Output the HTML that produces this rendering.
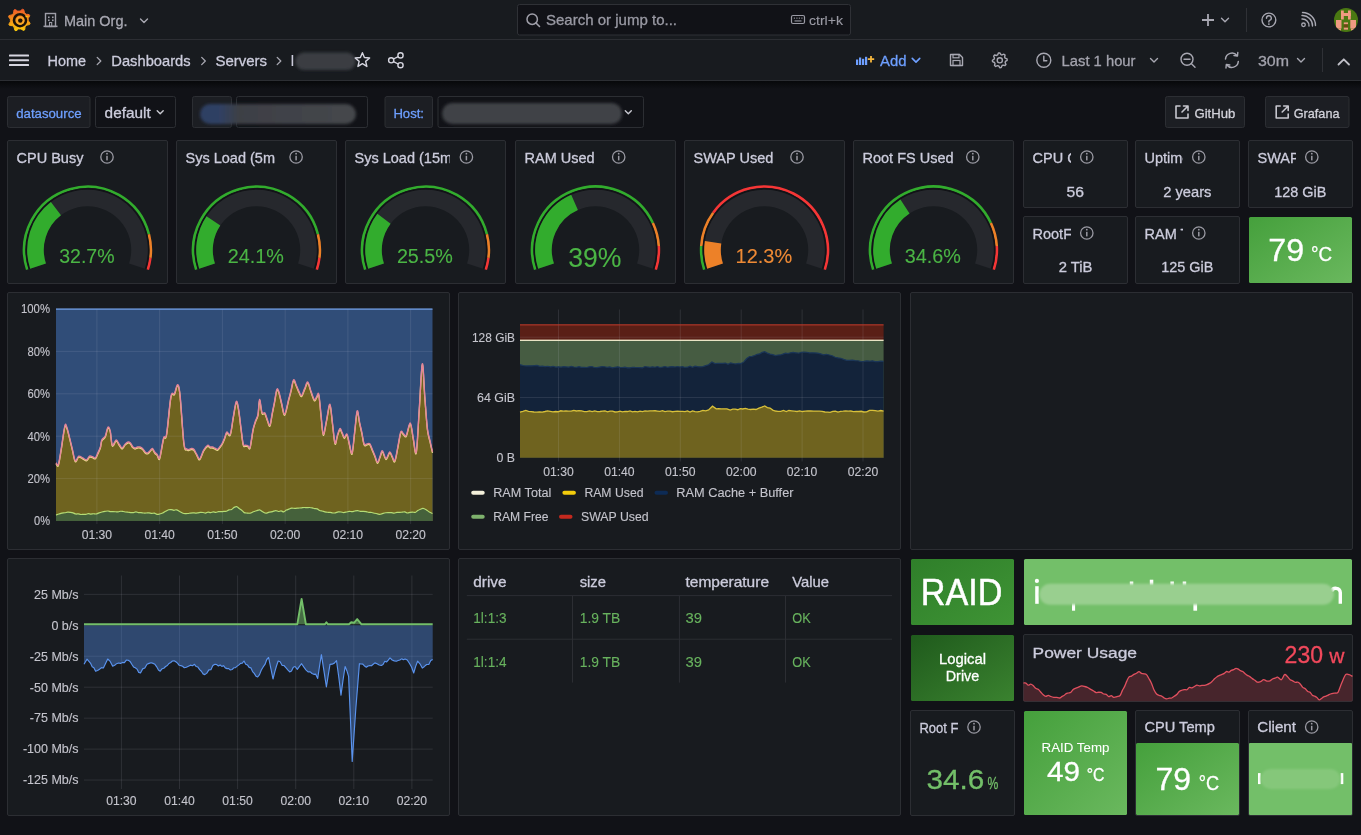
<!DOCTYPE html>
<html><head><meta charset="utf-8"><title>Grafana</title>
<style>html,body{margin:0;padding:0;background:#111217;overflow:hidden;width:1361px;height:835px}
svg{display:block;will-change:transform} text{font-family:"Liberation Sans",sans-serif}</style></head>
<body><svg width="1361" height="835" viewBox="0 0 1361 835">
<defs>
<linearGradient id="gshadow" x1="0" y1="0" x2="0" y2="1"><stop offset="0" stop-color="#07080a"/><stop offset="1" stop-color="#111217"/></linearGradient>
<linearGradient id="glogo" x1="0" y1="0" x2="0" y2="1"><stop offset="0" stop-color="#f05a28"/><stop offset="1" stop-color="#fbca0a"/></linearGradient>
<linearGradient id="gdg" x1="0" y1="0" x2="1" y2="1"><stop offset="0" stop-color="#2f7f2a"/><stop offset="1" stop-color="#3f9435"/></linearGradient>
<linearGradient id="gld" x1="0" y1="0" x2="1" y2="1"><stop offset="0" stop-color="#1f5a1c"/><stop offset="1" stop-color="#3a822f"/></linearGradient>
<linearGradient id="glg" x1="0" y1="0" x2="1" y2="1"><stop offset="0" stop-color="#45a03c"/><stop offset="1" stop-color="#6ab85e"/></linearGradient>
<filter id="blur1" x="-20%" y="-50%" width="140%" height="200%"><feGaussianBlur stdDeviation="0.9"/></filter>
<filter id="blur3" x="-20%" y="-50%" width="140%" height="200%"><feGaussianBlur stdDeviation="1.6"/></filter>
</defs>
<rect x="0" y="0" width="1361" height="835" fill="#111217"/>
<rect x="0" y="0" width="1361" height="80" fill="#181b1f"/>
<rect x="0" y="39" width="1361" height="1" fill="#2c2e33"/>
<rect x="0" y="80" width="1361" height="1" fill="#2c2e33"/>
<rect x="0" y="81" width="1361" height="8" fill="url(#gshadow)"/>
<path d="M21.32,10.04 L22.61,9.24 L23.65,9.62 L24.12,11.05 L24.37,12.47 L25.01,13.09 L25.66,13.68 L26.25,14.34 L27.77,14.38 L29.25,14.73 L29.71,15.73 L29.04,17.08 L28.21,18.26 L28.23,19.15 L28.27,20.03 L28.22,20.91 L29.26,22.02 L30.06,23.31 L29.68,24.35 L28.25,24.82 L26.83,25.07 L26.21,25.71 L25.62,26.36 L24.96,26.95 L24.92,28.47 L24.57,29.95 L23.57,30.41 L22.22,29.74 L21.04,28.91 L20.15,28.93 L19.27,28.97 L18.39,28.92 L17.28,29.96 L15.99,30.76 L14.95,30.38 L14.48,28.95 L14.23,27.53 L13.59,26.91 L12.94,26.32 L12.35,25.66 L10.83,25.62 L9.35,25.27 L8.89,24.27 L9.56,22.92 L10.39,21.74 L10.37,20.85 L10.33,19.97 L10.38,19.09 L9.34,17.98 L8.54,16.69 L8.92,15.65 L10.35,15.18 L11.77,14.93 L12.39,14.29 L12.98,13.64 L13.64,13.05 L13.68,11.53 L14.03,10.05 L15.03,9.59 L16.38,10.26 L17.56,11.09 L18.45,11.07 L19.33,11.03 L20.21,11.08 Z" fill="url(#glogo)" stroke="url(#glogo)" stroke-width="1" stroke-linejoin="round"/>
<circle cx="20.00" cy="20.20" r="6.0" fill="none" stroke="#1a1208" stroke-width="2.6"/>
<path d="M25.50,16.50 L28.30,15.00" stroke="url(#glogo)" stroke-width="2.2"/>
<circle cx="20.30" cy="20.60" r="3.3" fill="none" stroke="#f7a52a" stroke-width="1.5"/>
<circle cx="20.30" cy="20.60" r="2.2" fill="#1a1208"/>
<rect x="45.5" y="13.5" width="10" height="13" fill="none" stroke="#9e9ea8" stroke-width="1.4"/>
<rect x="43.5" y="25.6" width="14" height="1.5" fill="#9e9ea8"/>
<rect x="48" y="16.5" width="1.6" height="1.6" fill="#9e9ea8"/>
<rect x="48" y="19.5" width="1.6" height="1.6" fill="#9e9ea8"/>
<rect x="52" y="16.5" width="1.6" height="1.6" fill="#9e9ea8"/>
<rect x="52" y="19.5" width="1.6" height="1.6" fill="#9e9ea8"/>
<rect x="49.5" y="22.5" width="2.2" height="4" fill="none" stroke="#9e9ea8" stroke-width="1.1"/>
<text x="64.00" y="25.50" font-size="15.5" fill="#a8a8b2" stroke="#a8a8b2" stroke-width="0.3" textLength="63.50" lengthAdjust="spacingAndGlyphs">Main Org.</text>
<path d="M140.50,18.95 L144.00,22.45 L147.50,18.95" fill="none" stroke="#a8a8b2" stroke-width="1.4" stroke-linecap="round" stroke-linejoin="round"/>
<rect x="517.5" y="4.5" width="333" height="30.5" rx="2" fill="#111217" stroke="#2f3136"/>
<circle cx="532.2" cy="19.2" r="5.2" fill="none" stroke="#a0a0aa" stroke-width="1.5"/>
<path d="M536,23 L539.5,26.5" fill="none" stroke="#a0a0aa" stroke-width="1.6" stroke-linecap="round"/>
<text x="546.00" y="25.30" font-size="15" fill="#9a9aa4" stroke="#9a9aa4" stroke-width="0.3" textLength="131.00" lengthAdjust="spacingAndGlyphs">Search or jump to...</text>
<rect x="791.5" y="15.5" width="13" height="8" rx="1.5" fill="none" stroke="#9a9aa4" stroke-width="1.2"/>
<rect x="793.8" y="17.6" width="1.2" height="1.1" fill="#9a9aa4"/>
<rect x="796.3" y="17.6" width="1.2" height="1.1" fill="#9a9aa4"/>
<rect x="798.8" y="17.6" width="1.2" height="1.1" fill="#9a9aa4"/>
<rect x="801.3" y="17.6" width="1.2" height="1.1" fill="#9a9aa4"/>
<rect x="794.5" y="20.4" width="7" height="1.1" fill="#9a9aa4"/>
<text x="809.00" y="25.00" font-size="12.5" fill="#9a9aa4" stroke="#9a9aa4" stroke-width="0.12" textLength="34.00" lengthAdjust="spacingAndGlyphs">ctrl+k</text>
<path d="M1208,14 L1208,26 M1202,20 L1214,20" fill="none" stroke="#a8a8b2" stroke-width="1.8"/>
<path d="M1221.50,18.25 L1225.00,21.75 L1228.50,18.25" fill="none" stroke="#a8a8b2" stroke-width="1.4" stroke-linecap="round" stroke-linejoin="round"/>
<rect x="1246" y="8" width="1" height="24" fill="#2f3136"/>
<circle cx="1268.9" cy="20" r="6.9" fill="none" stroke="#a8a8b2" stroke-width="1.4"/>
<path d="M1266.5,18.2 A2.4,2.4 0 1 1 1269.6,20.4 L1268.9,21 L1268.9,22" fill="none" stroke="#a8a8b2" stroke-width="1.4" stroke-linecap="round"/>
<circle cx="1268.9" cy="24.1" r="0.9" fill="#a8a8b2"/>
<circle cx="1303.5" cy="24.8" r="1.8" fill="none" stroke="#a8a8b2" stroke-width="1.3"/>
<path d="M1302,19 A6.5,6.5 0 0 1 1309,26  M1302,15.5 A10,10 0 0 1 1312.5,26  M1302.5,12.5 A13,13 0 0 1 1315.5,25.5" fill="none" stroke="#a8a8b2" stroke-width="1.4" stroke-linecap="round"/>
<clipPath id="avc"><circle cx="1346" cy="20" r="12"/></clipPath>
<g clip-path="url(#avc)"><rect x="1334" y="8" width="24" height="24" fill="#4a7812"/>
<rect x="1341" y="10.5" width="2.8" height="9" fill="#ef9a82"/>
<rect x="1348" y="10.5" width="2.8" height="9" fill="#ef9a82"/>
<rect x="1341" y="13" width="9.8" height="3" fill="#ef9a82"/>
<rect x="1336" y="20" width="5.5" height="8.5" fill="#ef9a82"/>
<rect x="1350.3" y="20" width="5.7" height="8.5" fill="#ef9a82"/>
<rect x="1343.8" y="22.4" width="4.2" height="2" fill="#ef9a82"/>
<rect x="1343.8" y="27.4" width="4.2" height="2.2" fill="#ef9a82"/>
<rect x="1338" y="28.5" width="3" height="2" fill="#ef9a82"/>
<rect x="1351" y="28.5" width="3" height="2" fill="#ef9a82"/>
<rect x="1343.8" y="24.4" width="4.2" height="3" fill="#6a4a12"/>
</g>
<rect x="9" y="54.5" width="20" height="2" rx="0.6" fill="#d6d6e0"/>
<rect x="9" y="59.3" width="20" height="2" rx="0.6" fill="#d6d6e0"/>
<rect x="9" y="64.1" width="20" height="2" rx="0.6" fill="#d6d6e0"/>
<text x="47.50" y="66.00" font-size="15.5" fill="#ccccdc" stroke="#ccccdc" stroke-width="0.3" textLength="38.50" lengthAdjust="spacingAndGlyphs">Home</text>
<path d="M97.20,57.40 L100.80,61.00 L97.20,64.60" fill="none" stroke="#a8a8b2" stroke-width="1.3" stroke-linecap="round" stroke-linejoin="round"/>
<text x="111.30" y="66.00" font-size="15.5" fill="#ccccdc" stroke="#ccccdc" stroke-width="0.3" textLength="79.30" lengthAdjust="spacingAndGlyphs">Dashboards</text>
<path d="M201.70,57.40 L205.30,61.00 L201.70,64.60" fill="none" stroke="#a8a8b2" stroke-width="1.3" stroke-linecap="round" stroke-linejoin="round"/>
<text x="215.40" y="66.00" font-size="15.5" fill="#ccccdc" stroke="#ccccdc" stroke-width="0.3" textLength="51.60" lengthAdjust="spacingAndGlyphs">Servers</text>
<path d="M277.20,57.40 L280.80,61.00 L277.20,64.60" fill="none" stroke="#a8a8b2" stroke-width="1.3" stroke-linecap="round" stroke-linejoin="round"/>
<rect x="291.6" y="55" width="1.6" height="11" fill="#ccccdc"/>
<rect x="295.5" y="52.5" width="60" height="17.5" rx="8.7" fill="#3b3d42" filter="url(#blur3)"/>
<path d="M362.40,52.70 L364.41,57.53 L369.63,57.95 L365.65,61.36 L366.87,66.45 L362.40,63.72 L357.93,66.45 L359.15,61.36 L355.17,57.95 L360.39,57.53 Z" fill="none" stroke="#d6d6e0" stroke-width="1.4" stroke-linejoin="round"/>
<circle cx="400.5" cy="55.4" r="2.6" fill="none" stroke="#d6d6e0" stroke-width="1.4"/>
<circle cx="400.5" cy="65.2" r="2.6" fill="none" stroke="#d6d6e0" stroke-width="1.4"/>
<circle cx="391.2" cy="60.3" r="2.6" fill="none" stroke="#d6d6e0" stroke-width="1.4"/>
<path d="M393.5,59 L398.2,56.6 M393.5,61.6 L398.2,64" fill="none" stroke="#d6d6e0" stroke-width="1.4"/>
<rect x="856" y="59.5" width="2.2" height="5.5" fill="#6e9fff"/>
<rect x="859" y="57.5" width="2.2" height="7.5" fill="#6e9fff"/>
<rect x="862" y="58.8" width="2.2" height="6.2" fill="#6e9fff"/>
<rect x="865" y="56.8" width="2.2" height="8.2" fill="#6e9fff"/>
<path d="M871,56 L871,62.5 M867.8,59.2 L874.2,59.2" fill="none" stroke="#f5b73d" stroke-width="1.8"/>
<text x="880.00" y="65.80" font-size="15.5" fill="#6e9fff" stroke="#6e9fff" stroke-width="0.3" textLength="26.50" lengthAdjust="spacingAndGlyphs">Add</text>
<path d="M912.25,58.42 L916.00,62.17 L919.75,58.42" fill="none" stroke="#6e9fff" stroke-width="1.6" stroke-linecap="round" stroke-linejoin="round"/>
<path d="M950.5,54.5 L959.5,54.5 L962.5,57.5 L962.5,65.5 L950.5,65.5 Z" fill="none" stroke="#a8a8b2" stroke-width="1.4" stroke-linejoin="round"/>
<rect x="953" y="54.5" width="6" height="3.3" fill="none" stroke="#a8a8b2" stroke-width="1.2"/>
<rect x="953" y="60.5" width="7" height="5" fill="none" stroke="#a8a8b2" stroke-width="1.2"/>
<path d="M1007.20,60.30 L1007.06,61.74 L1005.13,62.51 L1004.60,63.51 L1005.03,65.53 L1003.91,66.45 L1002.01,65.63 L1000.93,65.96 L999.80,67.70 L998.36,67.56 L997.59,65.63 L996.59,65.10 L994.57,65.53 L993.65,64.41 L994.47,62.51 L994.14,61.43 L992.40,60.30 L992.54,58.86 L994.47,58.09 L995.00,57.09 L994.57,55.07 L995.69,54.15 L997.59,54.97 L998.67,54.64 L999.80,52.90 L1001.24,53.04 L1002.01,54.97 L1003.01,55.50 L1005.03,55.07 L1005.95,56.19 L1005.13,58.09 L1005.46,59.17 Z" fill="none" stroke="#a8a8b2" stroke-width="1.4" stroke-linejoin="round" transform="rotate(-11 999.8 60.3)"/>
<circle cx="999.8" cy="60.3" r="2.59" fill="none" stroke="#a8a8b2" stroke-width="1.4"/>
<circle cx="1043.8" cy="60.3" r="7" fill="none" stroke="#a8a8b2" stroke-width="1.4"/>
<path d="M1043.8,56.3 L1043.8,60.8 L1046.8,60.8" fill="none" stroke="#a8a8b2" stroke-width="1.4" stroke-linecap="round"/>
<text x="1061.60" y="65.80" font-size="15.5" fill="#a3a3ad" stroke="#a3a3ad" stroke-width="0.3" textLength="73.90" lengthAdjust="spacingAndGlyphs">Last 1 hour</text>
<path d="M1150.50,58.55 L1154.00,62.05 L1157.50,58.55" fill="none" stroke="#a8a8b2" stroke-width="1.4" stroke-linecap="round" stroke-linejoin="round"/>
<circle cx="1187" cy="59.3" r="6" fill="none" stroke="#a8a8b2" stroke-width="1.4"/>
<path d="M1184,59.3 L1190,59.3 M1191.5,63.8 L1195,67.2" fill="none" stroke="#a8a8b2" stroke-width="1.4" stroke-linecap="round"/>
<path d="M1225.5,59 A6.5,6.5 0 0 1 1237,55.5 M1238.3,61.5 A6.5,6.5 0 0 1 1226.8,65" fill="none" stroke="#a8a8b2" stroke-width="1.5" stroke-linecap="round"/>
<path d="M1237.8,52.5 L1237.5,56 L1234,55.5 M1226,68 L1226.3,64.5 L1229.8,65" fill="none" stroke="#a8a8b2" stroke-width="1.4" stroke-linecap="round" stroke-linejoin="round"/>
<text x="1258.00" y="65.80" font-size="15.5" fill="#a3a3ad" stroke="#a3a3ad" stroke-width="0.3" textLength="31.00" lengthAdjust="spacingAndGlyphs">30m</text>
<path d="M1297.50,58.55 L1301.00,62.05 L1304.50,58.55" fill="none" stroke="#a8a8b2" stroke-width="1.4" stroke-linecap="round" stroke-linejoin="round"/>
<rect x="1322" y="48" width="1" height="24" fill="#2f3136"/>
<path d="M1338.5,64.5 L1343.8,59.3 L1349,64.5" fill="none" stroke="#c0c0c8" stroke-width="1.8" stroke-linecap="round" stroke-linejoin="round"/>
<rect x="7.50" y="96.5" width="82.50" height="31" rx="2" fill="#1c1e23" stroke="#2c2e33"/>
<text x="16.20" y="117.50" font-size="13.5" fill="#6e9fff" stroke="#6e9fff" stroke-width="0.3" textLength="65.40" lengthAdjust="spacingAndGlyphs">datasource</text>
<rect x="95.50" y="96.5" width="80.00" height="31" rx="2" fill="#111217" stroke="#2c2e33"/>
<text x="104.60" y="117.80" font-size="14.5" fill="#ccccdc" stroke="#ccccdc" stroke-width="0.3" textLength="46.10" lengthAdjust="spacingAndGlyphs">default</text>
<path d="M157.20,110.70 L160.20,113.70 L163.20,110.70" fill="none" stroke="#c8c8d0" stroke-width="1.4" stroke-linecap="round" stroke-linejoin="round"/>
<rect x="192.50" y="96.5" width="39.00" height="31" rx="2" fill="#1c1e23" stroke="#2c2e33"/>
<rect x="236.50" y="96.5" width="131.00" height="31" rx="2" fill="#111217" stroke="#2c2e33"/>
<linearGradient id="gvb" x1="0" y1="0" x2="1" y2="0"><stop offset="0" stop-color="#2d3f63"/><stop offset="0.12" stop-color="#2f4064"/><stop offset="0.25" stop-color="#3d3f45"/><stop offset="1" stop-color="#45474c"/></linearGradient>
<rect x="200" y="104" width="156" height="20" rx="10" fill="url(#gvb)" filter="url(#blur3)"/>
<rect x="385.00" y="96.5" width="47.50" height="31" rx="2" fill="#1c1e23" stroke="#2c2e33"/>
<text x="393.40" y="117.50" font-size="13.5" fill="#6e9fff" stroke="#6e9fff" stroke-width="0.3" textLength="30.60" lengthAdjust="spacingAndGlyphs">Host:</text>
<rect x="438.00" y="96.5" width="205.50" height="31" rx="2" fill="#111217" stroke="#2c2e33"/>
<rect x="442" y="103" width="180" height="21" rx="10.5" fill="#404247" filter="url(#blur3)"/>
<path d="M625.30,110.70 L628.30,113.70 L631.30,110.70" fill="none" stroke="#c8c8d0" stroke-width="1.4" stroke-linecap="round" stroke-linejoin="round"/>
<rect x="1165.5" y="96.5" width="79" height="31" rx="2" fill="#1c1e23" stroke="#2c2e33"/>
<path d="M1180.00,106.00 L1176.00,106.00 L1176.00,118.00 L1188.00,118.00 L1188.00,114.00" fill="none" stroke="#c6c6ce" stroke-width="1.6" stroke-linejoin="round" stroke-linecap="round"/>
<path d="M1182.00,112.00 L1188.00,106.00 M1183.50,106.00 L1188.00,106.00 L1188.00,110.50" fill="none" stroke="#c6c6ce" stroke-width="1.6" stroke-linejoin="round" stroke-linecap="round"/>
<text x="1194.50" y="117.50" font-size="13.5" fill="#d2d2da" stroke="#d2d2da" stroke-width="0.3" textLength="40.80" lengthAdjust="spacingAndGlyphs">GitHub</text>
<rect x="1265.5" y="96.5" width="83.5" height="31" rx="2" fill="#1c1e23" stroke="#2c2e33"/>
<path d="M1280.20,106.00 L1276.20,106.00 L1276.20,118.00 L1288.20,118.00 L1288.20,114.00" fill="none" stroke="#c6c6ce" stroke-width="1.6" stroke-linejoin="round" stroke-linecap="round"/>
<path d="M1282.20,112.00 L1288.20,106.00 M1283.70,106.00 L1288.20,106.00 L1288.20,110.50" fill="none" stroke="#c6c6ce" stroke-width="1.6" stroke-linejoin="round" stroke-linecap="round"/>
<text x="1293.70" y="117.50" font-size="13.5" fill="#d2d2da" stroke="#d2d2da" stroke-width="0.3" textLength="45.80" lengthAdjust="spacingAndGlyphs">Grafana</text>
<rect x="7.50" y="140.50" width="160.00" height="143.00" rx="1.5" fill="#181b1f" stroke="#2c2e33" stroke-width="1"/>
<clipPath id="tc0"><rect x="7.0" y="140" width="83.00" height="40"/></clipPath>
<g clip-path="url(#tc0)">
<text x="16.50" y="162.50" font-size="14.5" fill="#ccccdc" stroke="#ccccdc" stroke-width="0.3">CPU Busy</text>
</g>
<circle cx="107.00" cy="157.00" r="6.2" fill="none" stroke="#9a9aa3" stroke-width="1.3"/>
<rect x="106.25" y="155.80" width="1.5" height="4.6" fill="#9a9aa3"/>
<circle cx="107.00" cy="153.70" r="0.9" fill="#9a9aa3"/>
<path d="M27.20,269.59 A63.40,63.40 0 1 1 148.91,234.23" fill="none" stroke="#32ac2d" stroke-width="2.6"/>
<path d="M148.91,234.23 A63.40,63.40 0 0 1 150.40,257.95" fill="none" stroke="#ed8128" stroke-width="2.6"/>
<path d="M150.40,257.95 A63.40,63.40 0 0 1 147.79,269.61" fill="none" stroke="#f53636" stroke-width="2.6"/>
<path d="M29.49,268.85 A61.00,61.00 0 1 1 145.51,268.85" fill="none" stroke="#121317" stroke-width="1.6"/>
<path d="M38.05,266.07 A52.00,52.00 0 1 1 136.95,266.07" fill="none" stroke="#26282d" stroke-width="16.6"/>
<path d="M38.05,266.07 A52.00,52.00 0 0 1 55.94,208.67" fill="none" stroke="#32ac2d" stroke-width="16.6"/>
<text x="86.90" y="263.00" font-size="19.5" fill="#4bb545" stroke="#4bb545" stroke-width="0.1" text-anchor="middle" textLength="55.40" lengthAdjust="spacingAndGlyphs">32.7%</text>
<rect x="176.50" y="140.50" width="160.00" height="143.00" rx="1.5" fill="#181b1f" stroke="#2c2e33" stroke-width="1"/>
<clipPath id="tc3"><rect x="176.0" y="140" width="103.00" height="40"/></clipPath>
<g clip-path="url(#tc3)">
<text x="185.50" y="162.50" font-size="14.5" fill="#ccccdc" stroke="#ccccdc" stroke-width="0.3">Sys Load (5m</text>
</g>
<circle cx="296.10" cy="157.00" r="6.2" fill="none" stroke="#9a9aa3" stroke-width="1.3"/>
<rect x="295.35" y="155.80" width="1.5" height="4.6" fill="#9a9aa3"/>
<circle cx="296.10" cy="153.70" r="0.9" fill="#9a9aa3"/>
<path d="M196.20,269.59 A63.40,63.40 0 1 1 317.91,234.23" fill="none" stroke="#32ac2d" stroke-width="2.6"/>
<path d="M317.91,234.23 A63.40,63.40 0 0 1 319.40,257.95" fill="none" stroke="#ed8128" stroke-width="2.6"/>
<path d="M319.40,257.95 A63.40,63.40 0 0 1 316.79,269.61" fill="none" stroke="#f53636" stroke-width="2.6"/>
<path d="M198.49,268.85 A61.00,61.00 0 1 1 314.51,268.85" fill="none" stroke="#121317" stroke-width="1.6"/>
<path d="M207.05,266.07 A52.00,52.00 0 1 1 305.95,266.07" fill="none" stroke="#26282d" stroke-width="16.6"/>
<path d="M207.05,266.07 A52.00,52.00 0 0 1 213.42,220.88" fill="none" stroke="#32ac2d" stroke-width="16.6"/>
<text x="255.90" y="263.00" font-size="19.5" fill="#4bb545" stroke="#4bb545" stroke-width="0.1" text-anchor="middle" textLength="56.10" lengthAdjust="spacingAndGlyphs">24.1%</text>
<rect x="345.50" y="140.50" width="160.00" height="143.00" rx="1.5" fill="#181b1f" stroke="#2c2e33" stroke-width="1"/>
<clipPath id="tc6"><rect x="345.0" y="140" width="105.00" height="40"/></clipPath>
<g clip-path="url(#tc6)">
<text x="354.50" y="162.50" font-size="14.5" fill="#ccccdc" stroke="#ccccdc" stroke-width="0.3">Sys Load (15m)</text>
</g>
<circle cx="466.40" cy="157.00" r="6.2" fill="none" stroke="#9a9aa3" stroke-width="1.3"/>
<rect x="465.65" y="155.80" width="1.5" height="4.6" fill="#9a9aa3"/>
<circle cx="466.40" cy="153.70" r="0.9" fill="#9a9aa3"/>
<path d="M365.20,269.59 A63.40,63.40 0 1 1 486.91,234.23" fill="none" stroke="#32ac2d" stroke-width="2.6"/>
<path d="M486.91,234.23 A63.40,63.40 0 0 1 488.40,257.95" fill="none" stroke="#ed8128" stroke-width="2.6"/>
<path d="M488.40,257.95 A63.40,63.40 0 0 1 485.79,269.61" fill="none" stroke="#f53636" stroke-width="2.6"/>
<path d="M367.49,268.85 A61.00,61.00 0 1 1 483.51,268.85" fill="none" stroke="#121317" stroke-width="1.6"/>
<path d="M376.05,266.07 A52.00,52.00 0 1 1 474.95,266.07" fill="none" stroke="#26282d" stroke-width="16.6"/>
<path d="M376.05,266.07 A52.00,52.00 0 0 1 384.01,218.65" fill="none" stroke="#32ac2d" stroke-width="16.6"/>
<text x="424.90" y="263.00" font-size="19.5" fill="#4bb545" stroke="#4bb545" stroke-width="0.1" text-anchor="middle" textLength="56.00" lengthAdjust="spacingAndGlyphs">25.5%</text>
<rect x="515.50" y="140.50" width="160.00" height="143.00" rx="1.5" fill="#181b1f" stroke="#2c2e33" stroke-width="1"/>
<clipPath id="tc9"><rect x="515.0" y="140" width="85.00" height="40"/></clipPath>
<g clip-path="url(#tc9)">
<text x="524.50" y="162.50" font-size="14.5" fill="#ccccdc" stroke="#ccccdc" stroke-width="0.3">RAM Used</text>
</g>
<circle cx="618.70" cy="157.00" r="6.2" fill="none" stroke="#9a9aa3" stroke-width="1.3"/>
<rect x="617.95" y="155.80" width="1.5" height="4.6" fill="#9a9aa3"/>
<circle cx="618.70" cy="153.70" r="0.9" fill="#9a9aa3"/>
<path d="M535.20,269.59 A63.40,63.40 0 0 1 652.87,223.01" fill="none" stroke="#32ac2d" stroke-width="2.6"/>
<path d="M652.87,223.01 A63.40,63.40 0 0 1 658.77,246.02" fill="none" stroke="#ed8128" stroke-width="2.6"/>
<path d="M658.77,246.02 A63.40,63.40 0 0 1 655.79,269.61" fill="none" stroke="#f53636" stroke-width="2.6"/>
<path d="M537.49,268.85 A61.00,61.00 0 1 1 653.51,268.85" fill="none" stroke="#121317" stroke-width="1.6"/>
<path d="M546.05,266.07 A52.00,52.00 0 1 1 644.95,266.07" fill="none" stroke="#26282d" stroke-width="16.6"/>
<path d="M546.05,266.07 A52.00,52.00 0 0 1 574.55,202.41" fill="none" stroke="#32ac2d" stroke-width="16.6"/>
<text x="594.90" y="267.00" font-size="27" fill="#4bb545" stroke="#4bb545" stroke-width="0.1" text-anchor="middle" textLength="53.30" lengthAdjust="spacingAndGlyphs">39%</text>
<rect x="684.50" y="140.50" width="160.00" height="143.00" rx="1.5" fill="#181b1f" stroke="#2c2e33" stroke-width="1"/>
<clipPath id="tc12"><rect x="684.0" y="140" width="96.00" height="40"/></clipPath>
<g clip-path="url(#tc12)">
<text x="693.50" y="162.50" font-size="14.5" fill="#ccccdc" stroke="#ccccdc" stroke-width="0.3">SWAP Used</text>
</g>
<circle cx="797.00" cy="157.00" r="6.2" fill="none" stroke="#9a9aa3" stroke-width="1.3"/>
<rect x="796.25" y="155.80" width="1.5" height="4.6" fill="#9a9aa3"/>
<circle cx="797.00" cy="153.70" r="0.9" fill="#9a9aa3"/>
<path d="M704.20,269.59 A63.40,63.40 0 0 1 701.23,246.02" fill="none" stroke="#32ac2d" stroke-width="2.6"/>
<path d="M701.23,246.02 A63.40,63.40 0 0 1 713.21,212.73" fill="none" stroke="#ed8128" stroke-width="2.6"/>
<path d="M713.21,212.73 A63.40,63.40 0 0 1 824.79,269.61" fill="none" stroke="#f53636" stroke-width="2.6"/>
<path d="M706.49,268.85 A61.00,61.00 0 1 1 822.51,268.85" fill="none" stroke="#121317" stroke-width="1.6"/>
<path d="M715.05,266.07 A52.00,52.00 0 1 1 813.95,266.07" fill="none" stroke="#26282d" stroke-width="16.6"/>
<path d="M715.05,266.07 A52.00,52.00 0 0 1 713.08,242.25" fill="none" stroke="#ed8128" stroke-width="16.6"/>
<text x="763.90" y="263.00" font-size="19.5" fill="#ee8a35" stroke="#ee8a35" stroke-width="0.1" text-anchor="middle" textLength="56.60" lengthAdjust="spacingAndGlyphs">12.3%</text>
<rect x="853.50" y="140.50" width="160.00" height="143.00" rx="1.5" fill="#181b1f" stroke="#2c2e33" stroke-width="1"/>
<clipPath id="tc15"><rect x="853.0" y="140" width="107.00" height="40"/></clipPath>
<g clip-path="url(#tc15)">
<text x="862.50" y="162.50" font-size="14.5" fill="#ccccdc" stroke="#ccccdc" stroke-width="0.3">Root FS Used</text>
</g>
<circle cx="972.80" cy="157.00" r="6.2" fill="none" stroke="#9a9aa3" stroke-width="1.3"/>
<rect x="972.05" y="155.80" width="1.5" height="4.6" fill="#9a9aa3"/>
<circle cx="972.80" cy="153.70" r="0.9" fill="#9a9aa3"/>
<path d="M873.20,269.59 A63.40,63.40 0 0 1 990.87,223.01" fill="none" stroke="#32ac2d" stroke-width="2.6"/>
<path d="M990.87,223.01 A63.40,63.40 0 0 1 996.77,246.02" fill="none" stroke="#ed8128" stroke-width="2.6"/>
<path d="M996.77,246.02 A63.40,63.40 0 0 1 993.79,269.61" fill="none" stroke="#f53636" stroke-width="2.6"/>
<path d="M875.49,268.85 A61.00,61.00 0 1 1 991.51,268.85" fill="none" stroke="#121317" stroke-width="1.6"/>
<path d="M884.05,266.07 A52.00,52.00 0 1 1 982.95,266.07" fill="none" stroke="#26282d" stroke-width="16.6"/>
<path d="M884.05,266.07 A52.00,52.00 0 0 1 904.98,206.52" fill="none" stroke="#32ac2d" stroke-width="16.6"/>
<text x="932.90" y="263.00" font-size="19.5" fill="#4bb545" stroke="#4bb545" stroke-width="0.1" text-anchor="middle" textLength="56.10" lengthAdjust="spacingAndGlyphs">34.6%</text>
<rect x="1023.50" y="140.50" width="104.00" height="67.00" rx="1.5" fill="#181b1f" stroke="#2c2e33" stroke-width="1"/>
<clipPath id="sc18_0"><rect x="1023.0" y="140" width="48" height="40"/></clipPath>
<g clip-path="url(#sc18_0)">
<text x="1032.50" y="162.50" font-size="14.5" fill="#ccccdc" stroke="#ccccdc" stroke-width="0.3">CPU Cores</text>
</g>
<circle cx="1086.80" cy="157.00" r="6.2" fill="none" stroke="#9a9aa3" stroke-width="1.3"/>
<rect x="1086.05" y="155.80" width="1.5" height="4.6" fill="#9a9aa3"/>
<circle cx="1086.80" cy="153.70" r="0.9" fill="#9a9aa3"/>
<text x="1075.35" y="196.50" font-size="15.5" fill="#ccccdc" stroke="#ccccdc" stroke-width="0.3" text-anchor="middle" textLength="17.50" lengthAdjust="spacingAndGlyphs">56</text>
<rect x="1135.50" y="140.50" width="104.00" height="67.00" rx="1.5" fill="#181b1f" stroke="#2c2e33" stroke-width="1"/>
<clipPath id="sc20_0"><rect x="1135.0" y="140" width="48" height="40"/></clipPath>
<g clip-path="url(#sc20_0)">
<text x="1144.50" y="162.50" font-size="14.5" fill="#ccccdc" stroke="#ccccdc" stroke-width="0.3">Uptime</text>
</g>
<circle cx="1198.80" cy="157.00" r="6.2" fill="none" stroke="#9a9aa3" stroke-width="1.3"/>
<rect x="1198.05" y="155.80" width="1.5" height="4.6" fill="#9a9aa3"/>
<circle cx="1198.80" cy="153.70" r="0.9" fill="#9a9aa3"/>
<text x="1187.35" y="196.50" font-size="15.5" fill="#ccccdc" stroke="#ccccdc" stroke-width="0.3" text-anchor="middle" textLength="48.30" lengthAdjust="spacingAndGlyphs">2 years</text>
<rect x="1248.50" y="140.50" width="104.00" height="67.00" rx="1.5" fill="#181b1f" stroke="#2c2e33" stroke-width="1"/>
<clipPath id="sc22_0"><rect x="1248.0" y="140" width="48" height="40"/></clipPath>
<g clip-path="url(#sc22_0)">
<text x="1257.50" y="162.50" font-size="14.5" fill="#ccccdc" stroke="#ccccdc" stroke-width="0.3">SWAP Total</text>
</g>
<circle cx="1311.80" cy="157.00" r="6.2" fill="none" stroke="#9a9aa3" stroke-width="1.3"/>
<rect x="1311.05" y="155.80" width="1.5" height="4.6" fill="#9a9aa3"/>
<circle cx="1311.80" cy="153.70" r="0.9" fill="#9a9aa3"/>
<text x="1300.35" y="196.50" font-size="15.5" fill="#ccccdc" stroke="#ccccdc" stroke-width="0.3" text-anchor="middle" textLength="52.10" lengthAdjust="spacingAndGlyphs">128 GiB</text>
<rect x="1023.50" y="216.50" width="104.00" height="67.00" rx="1.5" fill="#181b1f" stroke="#2c2e33" stroke-width="1"/>
<clipPath id="sc18_2"><rect x="1023.0" y="216" width="48" height="40"/></clipPath>
<g clip-path="url(#sc18_2)">
<text x="1032.50" y="238.50" font-size="14.5" fill="#ccccdc" stroke="#ccccdc" stroke-width="0.3">RootFS Total</text>
</g>
<circle cx="1086.80" cy="233.00" r="6.2" fill="none" stroke="#9a9aa3" stroke-width="1.3"/>
<rect x="1086.05" y="231.80" width="1.5" height="4.6" fill="#9a9aa3"/>
<circle cx="1086.80" cy="229.70" r="0.9" fill="#9a9aa3"/>
<text x="1075.60" y="272.30" font-size="15.5" fill="#ccccdc" stroke="#ccccdc" stroke-width="0.3" text-anchor="middle" textLength="33.80" lengthAdjust="spacingAndGlyphs">2 TiB</text>
<rect x="1135.50" y="216.50" width="104.00" height="67.00" rx="1.5" fill="#181b1f" stroke="#2c2e33" stroke-width="1"/>
<clipPath id="sc20_2"><rect x="1135.0" y="216" width="48" height="40"/></clipPath>
<g clip-path="url(#sc20_2)">
<text x="1144.50" y="238.50" font-size="14.5" fill="#ccccdc" stroke="#ccccdc" stroke-width="0.3">RAM Total</text>
</g>
<circle cx="1198.80" cy="233.00" r="6.2" fill="none" stroke="#9a9aa3" stroke-width="1.3"/>
<rect x="1198.05" y="231.80" width="1.5" height="4.6" fill="#9a9aa3"/>
<circle cx="1198.80" cy="229.70" r="0.9" fill="#9a9aa3"/>
<text x="1187.25" y="272.30" font-size="15.5" fill="#ccccdc" stroke="#ccccdc" stroke-width="0.3" text-anchor="middle" textLength="52.10" lengthAdjust="spacingAndGlyphs">125 GiB</text>
<rect x="1249.00" y="217.00" width="103.00" height="66.00" rx="1.5" fill="url(#glg)"/>
<text x="1286.30" y="260.80" font-size="31.5" fill="#ffffff" stroke="#ffffff" stroke-width="0.3" text-anchor="middle" textLength="35.90" lengthAdjust="spacingAndGlyphs">79</text>
<text x="1321.60" y="260.80" font-size="20" fill="#ffffff" stroke="#ffffff" stroke-width="0.3" text-anchor="middle" textLength="21.10" lengthAdjust="spacingAndGlyphs">°C</text>
<rect x="7.50" y="292.50" width="442.00" height="257.00" rx="1.5" fill="#181b1f" stroke="#2c2e33" stroke-width="1"/>
<rect x="56.0" y="309.0" width="376.5" height="212.0" fill="#304d78"/>
<path d="M56.00,462.80 C56.38,463.12 57.48,466.68 58.30,464.70 C59.12,462.72 59.82,457.32 60.90,450.90 C61.98,444.48 63.82,430.15 64.80,426.20 C65.78,422.25 65.99,425.25 66.80,427.20 C67.61,429.15 68.69,434.13 69.63,437.88 C70.58,441.62 71.52,445.87 72.47,449.69 C73.41,453.51 74.26,459.71 75.30,460.80 C76.34,461.89 77.48,456.70 78.70,456.20 C79.92,455.70 81.28,457.20 82.60,457.80 C83.92,458.40 85.45,460.07 86.60,459.80 C87.75,459.53 88.52,456.71 89.50,456.20 C90.48,455.69 91.50,456.47 92.50,456.74 C93.50,457.01 94.59,458.49 95.50,457.80 C96.41,457.11 97.13,454.41 97.95,452.61 C98.77,450.81 99.76,449.10 100.40,447.00 C101.04,444.90 100.98,441.83 101.80,440.00 C102.62,438.17 104.28,438.13 105.30,436.00 C106.32,433.87 107.07,428.02 107.90,427.20 C108.73,426.38 109.57,428.13 110.30,431.10 C111.03,434.07 111.32,443.52 112.30,445.00 C113.28,446.48 115.06,440.12 116.20,440.00 C117.34,439.88 118.17,442.92 119.15,444.25 C120.13,445.58 121.11,448.02 122.10,448.00 C123.09,447.98 124.10,445.13 125.10,444.13 C126.10,443.13 127.22,442.18 128.10,442.00 C128.98,441.82 129.63,442.25 130.40,443.03 C131.17,443.81 131.93,445.85 132.70,446.67 C133.47,447.50 134.21,447.94 135.00,448.00 C135.79,448.06 136.63,447.19 137.45,447.02 C138.27,446.85 139.05,446.76 139.90,447.00 C140.75,447.24 141.66,447.61 142.53,448.44 C143.41,449.26 144.29,451.18 145.17,451.92 C146.04,452.67 146.98,453.11 147.80,452.90 C148.62,452.69 149.33,451.37 150.10,450.64 C150.87,449.91 151.61,448.23 152.40,448.50 C153.19,448.77 154.02,451.25 154.83,452.27 C155.64,453.30 156.46,453.73 157.27,454.65 C158.08,455.57 158.64,460.58 159.70,457.80 C160.76,455.02 162.45,441.97 163.60,438.00 C164.75,434.03 165.38,440.90 166.60,434.00 C167.82,427.10 169.58,403.33 170.90,396.60 C172.22,389.87 173.40,395.58 174.50,393.60 C175.60,391.62 176.58,384.53 177.50,384.70 C178.42,384.87 178.93,384.88 180.00,394.60 C181.07,404.32 182.75,433.93 183.90,443.00 C185.05,452.07 186.02,447.94 186.90,449.00 C187.78,450.06 188.43,449.46 189.20,449.38 C189.97,449.30 190.73,448.51 191.50,448.50 C192.27,448.49 192.93,448.33 193.80,449.30 C194.68,450.27 195.77,452.74 196.75,454.32 C197.73,455.90 198.54,459.52 199.70,458.80 C200.86,458.08 202.38,452.23 203.70,450.00 C205.02,447.77 206.54,445.91 207.60,445.40 C208.66,444.89 209.23,446.67 210.05,446.94 C210.87,447.20 211.68,446.79 212.50,447.00 C213.32,447.21 214.17,447.81 215.00,448.20 C215.83,448.58 216.68,449.56 217.50,449.30 C218.32,449.04 219.13,447.68 219.95,446.63 C220.77,445.58 221.62,444.46 222.40,443.00 C223.18,441.54 223.87,439.71 224.60,437.89 C225.33,436.08 225.85,432.73 226.80,432.10 C227.75,431.47 229.22,436.63 230.30,434.10 C231.38,431.57 232.30,422.36 233.30,416.93 C234.30,411.49 235.42,402.75 236.30,401.50 C237.18,400.25 237.83,405.11 238.60,409.40 C239.37,413.69 240.13,421.45 240.90,427.22 C241.67,432.98 242.43,441.01 243.20,444.00 C243.97,446.99 244.73,444.92 245.50,445.18 C246.27,445.45 247.03,445.30 247.80,445.60 C248.57,445.91 249.22,449.73 250.10,447.00 C250.98,444.27 252.19,433.56 253.10,429.20 C254.01,424.84 254.73,423.30 255.55,420.81 C256.37,418.33 257.32,417.85 258.00,414.30 C258.68,410.75 258.93,399.82 259.60,399.50 C260.27,399.18 261.12,410.15 262.00,412.40 C262.88,414.65 264.00,411.76 264.90,413.00 C265.80,414.24 266.57,417.80 267.40,419.83 C268.23,421.86 269.10,426.29 269.90,425.20 C270.70,424.11 271.43,417.16 272.20,413.28 C272.97,409.40 273.73,405.85 274.50,401.90 C275.27,397.96 276.08,391.32 276.80,389.60 C277.52,387.88 277.98,389.25 278.80,391.60 C279.62,393.95 280.77,399.92 281.75,403.71 C282.73,407.49 283.56,415.00 284.70,414.30 C285.84,413.60 287.53,403.54 288.60,399.50 C289.67,395.46 290.27,393.36 291.10,390.08 C291.93,386.79 292.70,380.53 293.60,379.80 C294.50,379.07 295.60,383.75 296.50,385.70 C297.40,387.65 298.17,389.84 299.00,391.49 C299.83,393.14 300.56,396.08 301.50,395.60 C302.44,395.12 303.60,390.89 304.65,388.64 C305.70,386.39 306.73,381.61 307.80,382.10 C308.88,382.59 310.00,388.60 311.10,391.55 C312.20,394.50 313.48,398.90 314.40,399.80 C315.32,400.70 315.87,397.86 316.60,396.94 C317.33,396.02 318.06,391.27 318.80,394.30 C319.54,397.33 320.30,408.47 321.05,415.12 C321.80,421.77 322.38,433.39 323.30,434.20 C324.23,435.01 325.50,424.96 326.60,419.96 C327.70,414.96 328.92,403.73 329.90,404.20 C330.88,404.67 331.60,416.33 332.45,422.79 C333.30,429.26 334.17,440.95 335.00,443.00 C335.83,445.05 336.63,437.47 337.45,435.07 C338.27,432.67 339.12,429.03 339.90,428.60 C340.67,428.17 341.37,431.00 342.10,432.48 C342.83,433.97 343.48,437.21 344.30,437.50 C345.12,437.79 346.12,433.03 347.00,434.20 C347.88,435.37 348.70,441.40 349.55,444.53 C350.40,447.66 351.25,455.12 352.10,453.00 C352.95,450.88 353.80,438.84 354.65,431.82 C355.50,424.81 356.39,412.50 357.20,410.90 C358.01,409.30 358.76,418.60 359.53,422.22 C360.31,425.84 361.09,428.99 361.87,432.64 C362.64,436.28 363.34,442.22 364.20,444.10 C365.06,445.98 366.07,443.98 367.00,443.91 C367.93,443.85 368.91,442.74 369.80,443.70 C370.69,444.66 371.51,447.65 372.37,449.67 C373.22,451.69 374.08,453.70 374.93,455.80 C375.79,457.91 376.66,462.15 377.50,462.30 C378.34,462.45 379.13,458.64 379.95,456.72 C380.77,454.80 381.39,450.50 382.40,450.80 C383.41,451.10 384.78,458.32 386.00,458.50 C387.22,458.68 388.66,452.24 389.70,451.90 C390.74,451.56 391.40,455.00 392.25,456.47 C393.10,457.94 393.88,462.26 394.80,460.70 C395.73,459.14 396.80,451.91 397.80,447.11 C398.80,442.31 399.84,434.09 400.80,431.90 C401.76,429.71 402.63,433.40 403.55,433.96 C404.47,434.53 405.18,437.11 406.30,435.30 C407.43,433.49 409.13,422.59 410.30,423.10 C411.47,423.61 412.30,433.56 413.30,438.36 C414.30,443.16 415.30,456.87 416.30,451.90 C417.30,446.93 418.30,423.25 419.30,408.56 C420.30,393.88 421.38,365.70 422.30,363.80 C423.23,361.90 424.00,386.38 424.85,397.18 C425.70,407.98 426.55,421.36 427.40,428.60 C428.25,435.84 429.10,436.71 429.95,440.59 C430.80,444.48 432.07,450.02 432.50,451.90 L432.50,521.00 L56.00,521.00 Z" fill="#6f631f" stroke="none" stroke-width="1"/>
<path d="M56.00,515.00 C56.49,514.83 57.97,514.30 58.95,513.98 C59.93,513.67 60.92,513.33 61.90,513.12 C62.88,512.92 63.87,512.93 64.85,512.78 C65.83,512.62 66.87,512.26 67.80,512.20 C68.73,512.14 69.56,512.27 70.43,512.39 C71.31,512.50 72.19,512.61 73.07,512.88 C73.94,513.15 74.84,513.83 75.70,514.00 C76.56,514.17 77.39,513.80 78.24,513.88 C79.08,513.97 79.93,514.42 80.78,514.50 C81.62,514.58 82.47,514.39 83.31,514.36 C84.16,514.33 85.00,514.43 85.85,514.32 C86.70,514.20 87.54,513.71 88.39,513.67 C89.23,513.62 90.08,514.03 90.92,514.04 C91.77,514.05 92.62,513.74 93.46,513.73 C94.31,513.72 95.08,514.15 96.00,514.00 C96.92,513.85 98.00,513.19 99.00,512.86 C100.00,512.53 101.00,512.27 102.00,512.03 C103.00,511.79 104.00,511.58 105.00,511.41 C106.00,511.24 107.08,510.96 108.00,511.00 C108.92,511.04 109.69,511.53 110.54,511.64 C111.38,511.74 112.23,511.62 113.08,511.64 C113.92,511.66 114.77,511.70 115.62,511.74 C116.46,511.77 117.31,511.93 118.15,511.85 C119.00,511.77 119.85,511.30 120.69,511.25 C121.54,511.19 122.38,511.38 123.23,511.51 C124.08,511.64 124.92,511.89 125.77,512.01 C126.62,512.14 127.46,512.18 128.31,512.26 C129.15,512.35 130.00,512.46 130.85,512.53 C131.69,512.60 132.54,512.80 133.38,512.69 C134.23,512.57 135.08,511.87 135.92,511.86 C136.77,511.84 137.62,512.48 138.46,512.60 C139.31,512.73 140.13,512.53 141.00,512.60 C141.87,512.67 142.78,512.94 143.67,513.01 C144.56,513.07 145.45,513.04 146.34,513.01 C147.23,512.98 148.12,512.75 149.01,512.81 C149.90,512.87 150.80,513.32 151.69,513.37 C152.58,513.42 153.47,512.95 154.36,513.11 C155.25,513.27 156.14,514.17 157.03,514.32 C157.92,514.47 158.76,514.21 159.70,514.00 C160.64,513.79 161.68,513.50 162.67,513.04 C163.66,512.58 164.64,511.80 165.63,511.26 C166.62,510.72 167.67,510.08 168.60,509.80 C169.53,509.52 170.36,509.48 171.23,509.56 C172.11,509.64 172.99,510.25 173.87,510.29 C174.74,510.33 175.53,509.58 176.50,509.80 C177.47,510.02 178.63,511.02 179.70,511.59 C180.77,512.15 181.95,512.86 182.90,513.20 C183.85,513.54 184.58,513.55 185.42,513.60 C186.26,513.66 187.10,513.60 187.94,513.51 C188.78,513.42 189.62,513.15 190.45,513.05 C191.29,512.94 192.13,512.88 192.97,512.88 C193.81,512.88 194.65,513.06 195.49,513.05 C196.33,513.03 197.17,512.90 198.01,512.79 C198.85,512.68 199.69,512.46 200.53,512.41 C201.37,512.37 202.21,512.42 203.05,512.53 C203.88,512.64 204.72,513.15 205.56,513.08 C206.40,513.01 207.24,512.19 208.08,512.11 C208.92,512.03 209.74,512.65 210.60,512.60 C211.46,512.55 212.36,511.87 213.23,511.82 C214.11,511.77 214.99,512.32 215.87,512.28 C216.74,512.25 217.62,511.73 218.50,511.64 C219.38,511.54 220.26,511.75 221.13,511.71 C222.01,511.67 222.89,511.48 223.77,511.40 C224.64,511.31 225.53,511.46 226.40,511.20 C227.27,510.94 228.12,510.15 228.97,509.86 C229.83,509.58 230.69,509.91 231.55,509.50 C232.41,509.08 233.27,507.87 234.12,507.38 C234.98,506.90 235.85,506.41 236.70,506.60 C237.55,506.79 238.37,507.89 239.20,508.50 C240.03,509.10 240.87,509.56 241.70,510.24 C242.53,510.93 243.29,512.13 244.20,512.60 C245.11,513.07 246.17,512.96 247.15,513.06 C248.13,513.16 249.08,513.41 250.10,513.20 C251.12,512.99 252.21,512.20 253.27,511.80 C254.32,511.39 255.38,511.09 256.43,510.76 C257.49,510.43 258.55,509.63 259.60,509.80 C260.65,509.97 261.70,511.23 262.75,511.80 C263.80,512.36 264.82,513.15 265.90,513.20 C266.97,513.25 268.10,512.40 269.20,512.12 C270.30,511.84 271.40,511.79 272.50,511.54 C273.60,511.28 274.81,510.61 275.80,510.60 C276.79,510.59 277.56,511.43 278.43,511.49 C279.31,511.54 280.19,510.87 281.07,510.92 C281.94,510.97 282.82,511.94 283.70,511.80 C284.58,511.66 285.46,510.53 286.33,510.07 C287.21,509.62 288.09,509.39 288.97,509.07 C289.84,508.76 290.61,508.31 291.60,508.20 C292.59,508.09 293.80,508.41 294.90,508.38 C296.00,508.36 297.10,508.17 298.20,508.07 C299.30,507.97 300.50,507.89 301.50,507.80 C302.50,507.71 303.28,507.54 304.18,507.51 C305.07,507.48 305.96,507.65 306.85,507.65 C307.74,507.64 308.63,507.45 309.52,507.49 C310.42,507.53 311.34,507.71 312.20,507.90 C313.06,508.09 313.87,508.46 314.70,508.63 C315.53,508.79 316.37,508.60 317.20,508.90 C318.03,509.21 318.87,510.11 319.70,510.46 C320.53,510.81 321.34,510.77 322.20,511.00 C323.06,511.23 323.96,511.62 324.84,511.84 C325.72,512.05 326.60,512.18 327.48,512.27 C328.36,512.35 329.24,512.24 330.12,512.36 C331.00,512.48 331.88,512.92 332.76,512.99 C333.64,513.06 334.50,512.97 335.40,512.80 C336.30,512.63 337.25,512.08 338.17,511.95 C339.10,511.81 340.02,511.90 340.95,512.00 C341.88,512.09 342.80,512.53 343.73,512.53 C344.65,512.54 345.57,512.23 346.50,512.03 C347.43,511.83 348.35,511.38 349.27,511.32 C350.20,511.26 351.12,511.73 352.05,511.68 C352.98,511.63 353.90,511.20 354.83,511.02 C355.75,510.84 356.66,510.53 357.60,510.60 C358.54,510.67 359.50,511.34 360.44,511.45 C361.39,511.57 362.34,511.26 363.29,511.29 C364.23,511.33 365.18,511.46 366.13,511.64 C367.08,511.83 368.02,512.27 368.97,512.42 C369.92,512.56 370.87,512.38 371.81,512.52 C372.76,512.67 373.71,513.06 374.66,513.29 C375.60,513.52 376.56,513.74 377.50,513.90 C378.44,514.06 379.35,514.36 380.27,514.27 C381.20,514.17 382.12,513.58 383.05,513.32 C383.98,513.07 384.90,512.87 385.82,512.75 C386.75,512.63 387.68,512.63 388.60,512.60 C389.53,512.57 390.45,512.48 391.38,512.57 C392.30,512.65 393.22,513.14 394.15,513.12 C395.07,513.09 396.00,512.54 396.93,512.42 C397.85,512.30 398.81,512.45 399.70,512.40 C400.59,512.35 401.42,512.23 402.28,512.15 C403.14,512.07 404.01,511.78 404.87,511.92 C405.73,512.05 406.59,512.91 407.45,512.98 C408.31,513.04 409.17,512.46 410.03,512.31 C410.89,512.15 411.76,512.03 412.62,512.05 C413.48,512.06 414.34,512.65 415.20,512.40 C416.06,512.15 416.93,511.07 417.80,510.54 C418.67,510.00 419.53,509.56 420.40,509.20 C421.27,508.84 422.04,508.32 423.00,508.40 C423.96,508.48 425.11,509.10 426.17,509.70 C427.22,510.30 428.28,511.38 429.33,512.01 C430.39,512.65 431.97,513.25 432.50,513.50 L432.50,521.00 L56.00,521.00 Z" fill="#45613b" stroke="none" stroke-width="1"/>
<rect x="56.0" y="350.90" width="376.5" height="1" fill="rgba(204,204,220,0.12)"/>
<rect x="56.0" y="393.30" width="376.5" height="1" fill="rgba(204,204,220,0.12)"/>
<rect x="56.0" y="435.70" width="376.5" height="1" fill="rgba(204,204,220,0.12)"/>
<rect x="56.0" y="478.10" width="376.5" height="1" fill="rgba(204,204,220,0.12)"/>
<rect x="96.40" y="309.0" width="1" height="215.0" fill="rgba(204,204,220,0.12)"/>
<rect x="159.15" y="309.0" width="1" height="215.0" fill="rgba(204,204,220,0.12)"/>
<rect x="221.90" y="309.0" width="1" height="215.0" fill="rgba(204,204,220,0.12)"/>
<rect x="284.65" y="309.0" width="1" height="215.0" fill="rgba(204,204,220,0.12)"/>
<rect x="347.40" y="309.0" width="1" height="215.0" fill="rgba(204,204,220,0.12)"/>
<rect x="410.15" y="309.0" width="1" height="215.0" fill="rgba(204,204,220,0.12)"/>
<path d="M56.00,515.00 C56.49,514.83 57.97,514.30 58.95,513.98 C59.93,513.67 60.92,513.33 61.90,513.12 C62.88,512.92 63.87,512.93 64.85,512.78 C65.83,512.62 66.87,512.26 67.80,512.20 C68.73,512.14 69.56,512.27 70.43,512.39 C71.31,512.50 72.19,512.61 73.07,512.88 C73.94,513.15 74.84,513.83 75.70,514.00 C76.56,514.17 77.39,513.80 78.24,513.88 C79.08,513.97 79.93,514.42 80.78,514.50 C81.62,514.58 82.47,514.39 83.31,514.36 C84.16,514.33 85.00,514.43 85.85,514.32 C86.70,514.20 87.54,513.71 88.39,513.67 C89.23,513.62 90.08,514.03 90.92,514.04 C91.77,514.05 92.62,513.74 93.46,513.73 C94.31,513.72 95.08,514.15 96.00,514.00 C96.92,513.85 98.00,513.19 99.00,512.86 C100.00,512.53 101.00,512.27 102.00,512.03 C103.00,511.79 104.00,511.58 105.00,511.41 C106.00,511.24 107.08,510.96 108.00,511.00 C108.92,511.04 109.69,511.53 110.54,511.64 C111.38,511.74 112.23,511.62 113.08,511.64 C113.92,511.66 114.77,511.70 115.62,511.74 C116.46,511.77 117.31,511.93 118.15,511.85 C119.00,511.77 119.85,511.30 120.69,511.25 C121.54,511.19 122.38,511.38 123.23,511.51 C124.08,511.64 124.92,511.89 125.77,512.01 C126.62,512.14 127.46,512.18 128.31,512.26 C129.15,512.35 130.00,512.46 130.85,512.53 C131.69,512.60 132.54,512.80 133.38,512.69 C134.23,512.57 135.08,511.87 135.92,511.86 C136.77,511.84 137.62,512.48 138.46,512.60 C139.31,512.73 140.13,512.53 141.00,512.60 C141.87,512.67 142.78,512.94 143.67,513.01 C144.56,513.07 145.45,513.04 146.34,513.01 C147.23,512.98 148.12,512.75 149.01,512.81 C149.90,512.87 150.80,513.32 151.69,513.37 C152.58,513.42 153.47,512.95 154.36,513.11 C155.25,513.27 156.14,514.17 157.03,514.32 C157.92,514.47 158.76,514.21 159.70,514.00 C160.64,513.79 161.68,513.50 162.67,513.04 C163.66,512.58 164.64,511.80 165.63,511.26 C166.62,510.72 167.67,510.08 168.60,509.80 C169.53,509.52 170.36,509.48 171.23,509.56 C172.11,509.64 172.99,510.25 173.87,510.29 C174.74,510.33 175.53,509.58 176.50,509.80 C177.47,510.02 178.63,511.02 179.70,511.59 C180.77,512.15 181.95,512.86 182.90,513.20 C183.85,513.54 184.58,513.55 185.42,513.60 C186.26,513.66 187.10,513.60 187.94,513.51 C188.78,513.42 189.62,513.15 190.45,513.05 C191.29,512.94 192.13,512.88 192.97,512.88 C193.81,512.88 194.65,513.06 195.49,513.05 C196.33,513.03 197.17,512.90 198.01,512.79 C198.85,512.68 199.69,512.46 200.53,512.41 C201.37,512.37 202.21,512.42 203.05,512.53 C203.88,512.64 204.72,513.15 205.56,513.08 C206.40,513.01 207.24,512.19 208.08,512.11 C208.92,512.03 209.74,512.65 210.60,512.60 C211.46,512.55 212.36,511.87 213.23,511.82 C214.11,511.77 214.99,512.32 215.87,512.28 C216.74,512.25 217.62,511.73 218.50,511.64 C219.38,511.54 220.26,511.75 221.13,511.71 C222.01,511.67 222.89,511.48 223.77,511.40 C224.64,511.31 225.53,511.46 226.40,511.20 C227.27,510.94 228.12,510.15 228.97,509.86 C229.83,509.58 230.69,509.91 231.55,509.50 C232.41,509.08 233.27,507.87 234.12,507.38 C234.98,506.90 235.85,506.41 236.70,506.60 C237.55,506.79 238.37,507.89 239.20,508.50 C240.03,509.10 240.87,509.56 241.70,510.24 C242.53,510.93 243.29,512.13 244.20,512.60 C245.11,513.07 246.17,512.96 247.15,513.06 C248.13,513.16 249.08,513.41 250.10,513.20 C251.12,512.99 252.21,512.20 253.27,511.80 C254.32,511.39 255.38,511.09 256.43,510.76 C257.49,510.43 258.55,509.63 259.60,509.80 C260.65,509.97 261.70,511.23 262.75,511.80 C263.80,512.36 264.82,513.15 265.90,513.20 C266.97,513.25 268.10,512.40 269.20,512.12 C270.30,511.84 271.40,511.79 272.50,511.54 C273.60,511.28 274.81,510.61 275.80,510.60 C276.79,510.59 277.56,511.43 278.43,511.49 C279.31,511.54 280.19,510.87 281.07,510.92 C281.94,510.97 282.82,511.94 283.70,511.80 C284.58,511.66 285.46,510.53 286.33,510.07 C287.21,509.62 288.09,509.39 288.97,509.07 C289.84,508.76 290.61,508.31 291.60,508.20 C292.59,508.09 293.80,508.41 294.90,508.38 C296.00,508.36 297.10,508.17 298.20,508.07 C299.30,507.97 300.50,507.89 301.50,507.80 C302.50,507.71 303.28,507.54 304.18,507.51 C305.07,507.48 305.96,507.65 306.85,507.65 C307.74,507.64 308.63,507.45 309.52,507.49 C310.42,507.53 311.34,507.71 312.20,507.90 C313.06,508.09 313.87,508.46 314.70,508.63 C315.53,508.79 316.37,508.60 317.20,508.90 C318.03,509.21 318.87,510.11 319.70,510.46 C320.53,510.81 321.34,510.77 322.20,511.00 C323.06,511.23 323.96,511.62 324.84,511.84 C325.72,512.05 326.60,512.18 327.48,512.27 C328.36,512.35 329.24,512.24 330.12,512.36 C331.00,512.48 331.88,512.92 332.76,512.99 C333.64,513.06 334.50,512.97 335.40,512.80 C336.30,512.63 337.25,512.08 338.17,511.95 C339.10,511.81 340.02,511.90 340.95,512.00 C341.88,512.09 342.80,512.53 343.73,512.53 C344.65,512.54 345.57,512.23 346.50,512.03 C347.43,511.83 348.35,511.38 349.27,511.32 C350.20,511.26 351.12,511.73 352.05,511.68 C352.98,511.63 353.90,511.20 354.83,511.02 C355.75,510.84 356.66,510.53 357.60,510.60 C358.54,510.67 359.50,511.34 360.44,511.45 C361.39,511.57 362.34,511.26 363.29,511.29 C364.23,511.33 365.18,511.46 366.13,511.64 C367.08,511.83 368.02,512.27 368.97,512.42 C369.92,512.56 370.87,512.38 371.81,512.52 C372.76,512.67 373.71,513.06 374.66,513.29 C375.60,513.52 376.56,513.74 377.50,513.90 C378.44,514.06 379.35,514.36 380.27,514.27 C381.20,514.17 382.12,513.58 383.05,513.32 C383.98,513.07 384.90,512.87 385.82,512.75 C386.75,512.63 387.68,512.63 388.60,512.60 C389.53,512.57 390.45,512.48 391.38,512.57 C392.30,512.65 393.22,513.14 394.15,513.12 C395.07,513.09 396.00,512.54 396.93,512.42 C397.85,512.30 398.81,512.45 399.70,512.40 C400.59,512.35 401.42,512.23 402.28,512.15 C403.14,512.07 404.01,511.78 404.87,511.92 C405.73,512.05 406.59,512.91 407.45,512.98 C408.31,513.04 409.17,512.46 410.03,512.31 C410.89,512.15 411.76,512.03 412.62,512.05 C413.48,512.06 414.34,512.65 415.20,512.40 C416.06,512.15 416.93,511.07 417.80,510.54 C418.67,510.00 419.53,509.56 420.40,509.20 C421.27,508.84 422.04,508.32 423.00,508.40 C423.96,508.48 425.11,509.10 426.17,509.70 C427.22,510.30 428.28,511.38 429.33,512.01 C430.39,512.65 431.97,513.25 432.50,513.50" fill="none" stroke="#b5dc74" stroke-width="1.2" stroke-linejoin="round"/>
<path d="M56.00,462.80 C56.38,463.12 57.48,466.68 58.30,464.70 C59.12,462.72 59.82,457.32 60.90,450.90 C61.98,444.48 63.82,430.15 64.80,426.20 C65.78,422.25 65.99,425.25 66.80,427.20 C67.61,429.15 68.69,434.13 69.63,437.88 C70.58,441.62 71.52,445.87 72.47,449.69 C73.41,453.51 74.26,459.71 75.30,460.80 C76.34,461.89 77.48,456.70 78.70,456.20 C79.92,455.70 81.28,457.20 82.60,457.80 C83.92,458.40 85.45,460.07 86.60,459.80 C87.75,459.53 88.52,456.71 89.50,456.20 C90.48,455.69 91.50,456.47 92.50,456.74 C93.50,457.01 94.59,458.49 95.50,457.80 C96.41,457.11 97.13,454.41 97.95,452.61 C98.77,450.81 99.76,449.10 100.40,447.00 C101.04,444.90 100.98,441.83 101.80,440.00 C102.62,438.17 104.28,438.13 105.30,436.00 C106.32,433.87 107.07,428.02 107.90,427.20 C108.73,426.38 109.57,428.13 110.30,431.10 C111.03,434.07 111.32,443.52 112.30,445.00 C113.28,446.48 115.06,440.12 116.20,440.00 C117.34,439.88 118.17,442.92 119.15,444.25 C120.13,445.58 121.11,448.02 122.10,448.00 C123.09,447.98 124.10,445.13 125.10,444.13 C126.10,443.13 127.22,442.18 128.10,442.00 C128.98,441.82 129.63,442.25 130.40,443.03 C131.17,443.81 131.93,445.85 132.70,446.67 C133.47,447.50 134.21,447.94 135.00,448.00 C135.79,448.06 136.63,447.19 137.45,447.02 C138.27,446.85 139.05,446.76 139.90,447.00 C140.75,447.24 141.66,447.61 142.53,448.44 C143.41,449.26 144.29,451.18 145.17,451.92 C146.04,452.67 146.98,453.11 147.80,452.90 C148.62,452.69 149.33,451.37 150.10,450.64 C150.87,449.91 151.61,448.23 152.40,448.50 C153.19,448.77 154.02,451.25 154.83,452.27 C155.64,453.30 156.46,453.73 157.27,454.65 C158.08,455.57 158.64,460.58 159.70,457.80 C160.76,455.02 162.45,441.97 163.60,438.00 C164.75,434.03 165.38,440.90 166.60,434.00 C167.82,427.10 169.58,403.33 170.90,396.60 C172.22,389.87 173.40,395.58 174.50,393.60 C175.60,391.62 176.58,384.53 177.50,384.70 C178.42,384.87 178.93,384.88 180.00,394.60 C181.07,404.32 182.75,433.93 183.90,443.00 C185.05,452.07 186.02,447.94 186.90,449.00 C187.78,450.06 188.43,449.46 189.20,449.38 C189.97,449.30 190.73,448.51 191.50,448.50 C192.27,448.49 192.93,448.33 193.80,449.30 C194.68,450.27 195.77,452.74 196.75,454.32 C197.73,455.90 198.54,459.52 199.70,458.80 C200.86,458.08 202.38,452.23 203.70,450.00 C205.02,447.77 206.54,445.91 207.60,445.40 C208.66,444.89 209.23,446.67 210.05,446.94 C210.87,447.20 211.68,446.79 212.50,447.00 C213.32,447.21 214.17,447.81 215.00,448.20 C215.83,448.58 216.68,449.56 217.50,449.30 C218.32,449.04 219.13,447.68 219.95,446.63 C220.77,445.58 221.62,444.46 222.40,443.00 C223.18,441.54 223.87,439.71 224.60,437.89 C225.33,436.08 225.85,432.73 226.80,432.10 C227.75,431.47 229.22,436.63 230.30,434.10 C231.38,431.57 232.30,422.36 233.30,416.93 C234.30,411.49 235.42,402.75 236.30,401.50 C237.18,400.25 237.83,405.11 238.60,409.40 C239.37,413.69 240.13,421.45 240.90,427.22 C241.67,432.98 242.43,441.01 243.20,444.00 C243.97,446.99 244.73,444.92 245.50,445.18 C246.27,445.45 247.03,445.30 247.80,445.60 C248.57,445.91 249.22,449.73 250.10,447.00 C250.98,444.27 252.19,433.56 253.10,429.20 C254.01,424.84 254.73,423.30 255.55,420.81 C256.37,418.33 257.32,417.85 258.00,414.30 C258.68,410.75 258.93,399.82 259.60,399.50 C260.27,399.18 261.12,410.15 262.00,412.40 C262.88,414.65 264.00,411.76 264.90,413.00 C265.80,414.24 266.57,417.80 267.40,419.83 C268.23,421.86 269.10,426.29 269.90,425.20 C270.70,424.11 271.43,417.16 272.20,413.28 C272.97,409.40 273.73,405.85 274.50,401.90 C275.27,397.96 276.08,391.32 276.80,389.60 C277.52,387.88 277.98,389.25 278.80,391.60 C279.62,393.95 280.77,399.92 281.75,403.71 C282.73,407.49 283.56,415.00 284.70,414.30 C285.84,413.60 287.53,403.54 288.60,399.50 C289.67,395.46 290.27,393.36 291.10,390.08 C291.93,386.79 292.70,380.53 293.60,379.80 C294.50,379.07 295.60,383.75 296.50,385.70 C297.40,387.65 298.17,389.84 299.00,391.49 C299.83,393.14 300.56,396.08 301.50,395.60 C302.44,395.12 303.60,390.89 304.65,388.64 C305.70,386.39 306.73,381.61 307.80,382.10 C308.88,382.59 310.00,388.60 311.10,391.55 C312.20,394.50 313.48,398.90 314.40,399.80 C315.32,400.70 315.87,397.86 316.60,396.94 C317.33,396.02 318.06,391.27 318.80,394.30 C319.54,397.33 320.30,408.47 321.05,415.12 C321.80,421.77 322.38,433.39 323.30,434.20 C324.23,435.01 325.50,424.96 326.60,419.96 C327.70,414.96 328.92,403.73 329.90,404.20 C330.88,404.67 331.60,416.33 332.45,422.79 C333.30,429.26 334.17,440.95 335.00,443.00 C335.83,445.05 336.63,437.47 337.45,435.07 C338.27,432.67 339.12,429.03 339.90,428.60 C340.67,428.17 341.37,431.00 342.10,432.48 C342.83,433.97 343.48,437.21 344.30,437.50 C345.12,437.79 346.12,433.03 347.00,434.20 C347.88,435.37 348.70,441.40 349.55,444.53 C350.40,447.66 351.25,455.12 352.10,453.00 C352.95,450.88 353.80,438.84 354.65,431.82 C355.50,424.81 356.39,412.50 357.20,410.90 C358.01,409.30 358.76,418.60 359.53,422.22 C360.31,425.84 361.09,428.99 361.87,432.64 C362.64,436.28 363.34,442.22 364.20,444.10 C365.06,445.98 366.07,443.98 367.00,443.91 C367.93,443.85 368.91,442.74 369.80,443.70 C370.69,444.66 371.51,447.65 372.37,449.67 C373.22,451.69 374.08,453.70 374.93,455.80 C375.79,457.91 376.66,462.15 377.50,462.30 C378.34,462.45 379.13,458.64 379.95,456.72 C380.77,454.80 381.39,450.50 382.40,450.80 C383.41,451.10 384.78,458.32 386.00,458.50 C387.22,458.68 388.66,452.24 389.70,451.90 C390.74,451.56 391.40,455.00 392.25,456.47 C393.10,457.94 393.88,462.26 394.80,460.70 C395.73,459.14 396.80,451.91 397.80,447.11 C398.80,442.31 399.84,434.09 400.80,431.90 C401.76,429.71 402.63,433.40 403.55,433.96 C404.47,434.53 405.18,437.11 406.30,435.30 C407.43,433.49 409.13,422.59 410.30,423.10 C411.47,423.61 412.30,433.56 413.30,438.36 C414.30,443.16 415.30,456.87 416.30,451.90 C417.30,446.93 418.30,423.25 419.30,408.56 C420.30,393.88 421.38,365.70 422.30,363.80 C423.23,361.90 424.00,386.38 424.85,397.18 C425.70,407.98 426.55,421.36 427.40,428.60 C428.25,435.84 429.10,436.71 429.95,440.59 C430.80,444.48 432.07,450.02 432.50,451.90" fill="none" stroke="#ecdc8c" stroke-width="1.3" stroke-linejoin="round" transform="translate(0,1.0)"/>
<path d="M56.00,462.80 C56.38,463.12 57.48,466.68 58.30,464.70 C59.12,462.72 59.82,457.32 60.90,450.90 C61.98,444.48 63.82,430.15 64.80,426.20 C65.78,422.25 65.99,425.25 66.80,427.20 C67.61,429.15 68.69,434.13 69.63,437.88 C70.58,441.62 71.52,445.87 72.47,449.69 C73.41,453.51 74.26,459.71 75.30,460.80 C76.34,461.89 77.48,456.70 78.70,456.20 C79.92,455.70 81.28,457.20 82.60,457.80 C83.92,458.40 85.45,460.07 86.60,459.80 C87.75,459.53 88.52,456.71 89.50,456.20 C90.48,455.69 91.50,456.47 92.50,456.74 C93.50,457.01 94.59,458.49 95.50,457.80 C96.41,457.11 97.13,454.41 97.95,452.61 C98.77,450.81 99.76,449.10 100.40,447.00 C101.04,444.90 100.98,441.83 101.80,440.00 C102.62,438.17 104.28,438.13 105.30,436.00 C106.32,433.87 107.07,428.02 107.90,427.20 C108.73,426.38 109.57,428.13 110.30,431.10 C111.03,434.07 111.32,443.52 112.30,445.00 C113.28,446.48 115.06,440.12 116.20,440.00 C117.34,439.88 118.17,442.92 119.15,444.25 C120.13,445.58 121.11,448.02 122.10,448.00 C123.09,447.98 124.10,445.13 125.10,444.13 C126.10,443.13 127.22,442.18 128.10,442.00 C128.98,441.82 129.63,442.25 130.40,443.03 C131.17,443.81 131.93,445.85 132.70,446.67 C133.47,447.50 134.21,447.94 135.00,448.00 C135.79,448.06 136.63,447.19 137.45,447.02 C138.27,446.85 139.05,446.76 139.90,447.00 C140.75,447.24 141.66,447.61 142.53,448.44 C143.41,449.26 144.29,451.18 145.17,451.92 C146.04,452.67 146.98,453.11 147.80,452.90 C148.62,452.69 149.33,451.37 150.10,450.64 C150.87,449.91 151.61,448.23 152.40,448.50 C153.19,448.77 154.02,451.25 154.83,452.27 C155.64,453.30 156.46,453.73 157.27,454.65 C158.08,455.57 158.64,460.58 159.70,457.80 C160.76,455.02 162.45,441.97 163.60,438.00 C164.75,434.03 165.38,440.90 166.60,434.00 C167.82,427.10 169.58,403.33 170.90,396.60 C172.22,389.87 173.40,395.58 174.50,393.60 C175.60,391.62 176.58,384.53 177.50,384.70 C178.42,384.87 178.93,384.88 180.00,394.60 C181.07,404.32 182.75,433.93 183.90,443.00 C185.05,452.07 186.02,447.94 186.90,449.00 C187.78,450.06 188.43,449.46 189.20,449.38 C189.97,449.30 190.73,448.51 191.50,448.50 C192.27,448.49 192.93,448.33 193.80,449.30 C194.68,450.27 195.77,452.74 196.75,454.32 C197.73,455.90 198.54,459.52 199.70,458.80 C200.86,458.08 202.38,452.23 203.70,450.00 C205.02,447.77 206.54,445.91 207.60,445.40 C208.66,444.89 209.23,446.67 210.05,446.94 C210.87,447.20 211.68,446.79 212.50,447.00 C213.32,447.21 214.17,447.81 215.00,448.20 C215.83,448.58 216.68,449.56 217.50,449.30 C218.32,449.04 219.13,447.68 219.95,446.63 C220.77,445.58 221.62,444.46 222.40,443.00 C223.18,441.54 223.87,439.71 224.60,437.89 C225.33,436.08 225.85,432.73 226.80,432.10 C227.75,431.47 229.22,436.63 230.30,434.10 C231.38,431.57 232.30,422.36 233.30,416.93 C234.30,411.49 235.42,402.75 236.30,401.50 C237.18,400.25 237.83,405.11 238.60,409.40 C239.37,413.69 240.13,421.45 240.90,427.22 C241.67,432.98 242.43,441.01 243.20,444.00 C243.97,446.99 244.73,444.92 245.50,445.18 C246.27,445.45 247.03,445.30 247.80,445.60 C248.57,445.91 249.22,449.73 250.10,447.00 C250.98,444.27 252.19,433.56 253.10,429.20 C254.01,424.84 254.73,423.30 255.55,420.81 C256.37,418.33 257.32,417.85 258.00,414.30 C258.68,410.75 258.93,399.82 259.60,399.50 C260.27,399.18 261.12,410.15 262.00,412.40 C262.88,414.65 264.00,411.76 264.90,413.00 C265.80,414.24 266.57,417.80 267.40,419.83 C268.23,421.86 269.10,426.29 269.90,425.20 C270.70,424.11 271.43,417.16 272.20,413.28 C272.97,409.40 273.73,405.85 274.50,401.90 C275.27,397.96 276.08,391.32 276.80,389.60 C277.52,387.88 277.98,389.25 278.80,391.60 C279.62,393.95 280.77,399.92 281.75,403.71 C282.73,407.49 283.56,415.00 284.70,414.30 C285.84,413.60 287.53,403.54 288.60,399.50 C289.67,395.46 290.27,393.36 291.10,390.08 C291.93,386.79 292.70,380.53 293.60,379.80 C294.50,379.07 295.60,383.75 296.50,385.70 C297.40,387.65 298.17,389.84 299.00,391.49 C299.83,393.14 300.56,396.08 301.50,395.60 C302.44,395.12 303.60,390.89 304.65,388.64 C305.70,386.39 306.73,381.61 307.80,382.10 C308.88,382.59 310.00,388.60 311.10,391.55 C312.20,394.50 313.48,398.90 314.40,399.80 C315.32,400.70 315.87,397.86 316.60,396.94 C317.33,396.02 318.06,391.27 318.80,394.30 C319.54,397.33 320.30,408.47 321.05,415.12 C321.80,421.77 322.38,433.39 323.30,434.20 C324.23,435.01 325.50,424.96 326.60,419.96 C327.70,414.96 328.92,403.73 329.90,404.20 C330.88,404.67 331.60,416.33 332.45,422.79 C333.30,429.26 334.17,440.95 335.00,443.00 C335.83,445.05 336.63,437.47 337.45,435.07 C338.27,432.67 339.12,429.03 339.90,428.60 C340.67,428.17 341.37,431.00 342.10,432.48 C342.83,433.97 343.48,437.21 344.30,437.50 C345.12,437.79 346.12,433.03 347.00,434.20 C347.88,435.37 348.70,441.40 349.55,444.53 C350.40,447.66 351.25,455.12 352.10,453.00 C352.95,450.88 353.80,438.84 354.65,431.82 C355.50,424.81 356.39,412.50 357.20,410.90 C358.01,409.30 358.76,418.60 359.53,422.22 C360.31,425.84 361.09,428.99 361.87,432.64 C362.64,436.28 363.34,442.22 364.20,444.10 C365.06,445.98 366.07,443.98 367.00,443.91 C367.93,443.85 368.91,442.74 369.80,443.70 C370.69,444.66 371.51,447.65 372.37,449.67 C373.22,451.69 374.08,453.70 374.93,455.80 C375.79,457.91 376.66,462.15 377.50,462.30 C378.34,462.45 379.13,458.64 379.95,456.72 C380.77,454.80 381.39,450.50 382.40,450.80 C383.41,451.10 384.78,458.32 386.00,458.50 C387.22,458.68 388.66,452.24 389.70,451.90 C390.74,451.56 391.40,455.00 392.25,456.47 C393.10,457.94 393.88,462.26 394.80,460.70 C395.73,459.14 396.80,451.91 397.80,447.11 C398.80,442.31 399.84,434.09 400.80,431.90 C401.76,429.71 402.63,433.40 403.55,433.96 C404.47,434.53 405.18,437.11 406.30,435.30 C407.43,433.49 409.13,422.59 410.30,423.10 C411.47,423.61 412.30,433.56 413.30,438.36 C414.30,443.16 415.30,456.87 416.30,451.90 C417.30,446.93 418.30,423.25 419.30,408.56 C420.30,393.88 421.38,365.70 422.30,363.80 C423.23,361.90 424.00,386.38 424.85,397.18 C425.70,407.98 426.55,421.36 427.40,428.60 C428.25,435.84 429.10,436.71 429.95,440.59 C430.80,444.48 432.07,450.02 432.50,451.90" fill="none" stroke="#e4859a" stroke-width="1.4" stroke-linejoin="round"/>
<rect x="56.0" y="308.4" width="376.5" height="1.4" fill="#6d98dc"/>
<text x="50.00" y="313.30" font-size="12.5" fill="#c4c4cc" stroke="#c4c4cc" stroke-width="0.12" text-anchor="end" textLength="29.00" lengthAdjust="spacingAndGlyphs">100%</text>
<text x="50.00" y="355.70" font-size="12.5" fill="#c4c4cc" stroke="#c4c4cc" stroke-width="0.12" text-anchor="end" textLength="22.50" lengthAdjust="spacingAndGlyphs">80%</text>
<text x="50.00" y="398.10" font-size="12.5" fill="#c4c4cc" stroke="#c4c4cc" stroke-width="0.12" text-anchor="end" textLength="22.50" lengthAdjust="spacingAndGlyphs">60%</text>
<text x="50.00" y="440.50" font-size="12.5" fill="#c4c4cc" stroke="#c4c4cc" stroke-width="0.12" text-anchor="end" textLength="22.50" lengthAdjust="spacingAndGlyphs">40%</text>
<text x="50.00" y="482.90" font-size="12.5" fill="#c4c4cc" stroke="#c4c4cc" stroke-width="0.12" text-anchor="end" textLength="22.50" lengthAdjust="spacingAndGlyphs">20%</text>
<text x="50.00" y="525.30" font-size="12.5" fill="#c4c4cc" stroke="#c4c4cc" stroke-width="0.12" text-anchor="end" textLength="16.00" lengthAdjust="spacingAndGlyphs">0%</text>
<text x="96.90" y="539.00" font-size="12.5" fill="#c4c4cc" stroke="#c4c4cc" stroke-width="0.12" text-anchor="middle" textLength="30.50" lengthAdjust="spacingAndGlyphs">01:30</text>
<text x="159.65" y="539.00" font-size="12.5" fill="#c4c4cc" stroke="#c4c4cc" stroke-width="0.12" text-anchor="middle" textLength="30.50" lengthAdjust="spacingAndGlyphs">01:40</text>
<text x="222.40" y="539.00" font-size="12.5" fill="#c4c4cc" stroke="#c4c4cc" stroke-width="0.12" text-anchor="middle" textLength="30.50" lengthAdjust="spacingAndGlyphs">01:50</text>
<text x="285.15" y="539.00" font-size="12.5" fill="#c4c4cc" stroke="#c4c4cc" stroke-width="0.12" text-anchor="middle" textLength="30.50" lengthAdjust="spacingAndGlyphs">02:00</text>
<text x="347.90" y="539.00" font-size="12.5" fill="#c4c4cc" stroke="#c4c4cc" stroke-width="0.12" text-anchor="middle" textLength="30.50" lengthAdjust="spacingAndGlyphs">02:10</text>
<text x="410.65" y="539.00" font-size="12.5" fill="#c4c4cc" stroke="#c4c4cc" stroke-width="0.12" text-anchor="middle" textLength="30.50" lengthAdjust="spacingAndGlyphs">02:20</text>
<rect x="458.50" y="292.50" width="442.00" height="257.00" rx="1.5" fill="#181b1f" stroke="#2c2e33" stroke-width="1"/>
<rect x="520.0" y="324.8" width="363.6" height="15.5" fill="#5a1f16"/>
<rect x="520.0" y="340.3" width="363.6" height="117.5" fill="#465c42"/>
<path d="M520.00,364.70 L523.00,365.48 L526.00,365.88 L529.00,365.80 L531.68,365.87 L534.36,365.65 L537.05,365.37 L539.73,366.39 L542.41,366.21 L545.09,366.71 L547.77,366.26 L550.45,366.91 L553.14,366.30 L555.82,367.13 L558.50,366.80 L561.06,367.14 L563.62,366.72 L566.19,366.92 L568.75,367.14 L571.31,366.47 L573.88,367.00 L576.44,367.37 L579.00,366.64 L581.56,367.41 L584.12,367.27 L586.69,367.51 L589.25,366.82 L591.81,366.50 L594.38,367.51 L596.94,367.54 L599.50,367.06 L602.06,366.59 L604.62,366.75 L607.19,367.38 L609.75,366.92 L612.31,367.87 L614.88,367.38 L617.44,366.86 L620.00,367.30 L622.50,367.51 L625.00,367.08 L627.50,367.87 L630.00,367.82 L632.50,367.26 L635.00,367.43 L637.50,367.49 L640.00,367.63 L642.50,367.85 L645.00,366.51 L647.50,366.97 L650.00,367.29 L652.50,366.86 L655.00,367.25 L657.50,366.54 L660.00,367.63 L662.50,367.12 L665.00,366.54 L667.50,367.29 L670.00,366.79 L672.50,366.61 L675.00,367.00 L677.50,366.51 L680.00,367.00 L682.50,366.57 L685.00,367.46 L687.50,367.20 L690.00,366.22 L692.50,367.26 L695.00,366.17 L697.50,366.59 L700.00,366.80 L702.87,366.67 L705.73,365.57 L708.60,364.70 L711.90,362.00 L715.00,363.60 L717.60,363.33 L720.20,363.43 L722.80,363.44 L725.40,363.08 L728.00,364.30 L730.60,362.98 L733.20,363.49 L735.80,363.94 L738.40,363.46 L741.00,363.60 L743.87,361.91 L746.73,358.51 L749.60,356.50 L752.12,356.37 L754.63,355.45 L757.15,354.34 L759.67,353.85 L762.18,352.43 L764.70,351.70 L767.38,353.14 L770.05,354.06 L772.73,354.65 L775.40,355.60 L777.92,355.09 L780.43,354.95 L782.95,354.07 L785.47,353.15 L787.98,353.61 L790.50,352.80 L793.19,352.47 L795.88,352.78 L798.56,353.20 L801.25,352.34 L803.94,352.13 L806.62,352.27 L809.31,352.93 L812.00,352.80 L814.88,352.97 L817.77,353.19 L820.65,353.83 L823.53,354.87 L826.42,354.29 L829.30,355.00 L832.18,355.76 L835.07,357.30 L837.95,357.81 L840.83,358.21 L843.72,359.38 L846.60,360.30 L849.47,360.45 L852.33,360.17 L855.20,360.68 L858.07,360.76 L860.93,361.64 L863.80,361.40 L866.67,360.95 L869.53,361.22 L872.40,360.80 L875.20,361.61 L878.00,361.69 L880.80,361.08 L883.60,361.40 L883.60,457.80 L520.00,457.80 Z" fill="#13233a" stroke="none" stroke-width="1"/>
<path d="M520.00,412.10 L522.90,411.40 L525.80,410.40 L528.50,411.34 L531.20,411.70 L533.96,412.01 L536.72,412.15 L539.48,411.87 L542.24,412.05 L545.00,411.50 L547.62,410.89 L550.23,411.38 L552.85,411.91 L555.47,411.51 L558.08,411.77 L560.70,410.79 L563.32,411.17 L565.93,410.86 L568.55,411.18 L571.17,411.17 L573.78,410.46 L576.40,411.00 L579.02,410.72 L581.64,410.85 L584.27,411.67 L586.89,411.54 L589.51,410.87 L592.13,411.69 L594.76,410.96 L597.38,411.59 L600.00,411.50 L602.50,411.03 L605.00,410.86 L607.50,411.89 L610.00,411.08 L612.50,411.06 L615.00,411.97 L617.50,411.82 L620.00,411.10 L622.50,411.89 L625.00,411.36 L627.50,411.51 L630.00,410.92 L632.50,411.79 L635.00,411.47 L637.50,411.78 L640.00,411.20 L642.50,411.68 L645.00,410.98 L647.50,411.07 L650.00,410.85 L652.50,410.84 L655.00,410.75 L657.50,411.05 L660.00,411.42 L662.50,410.72 L665.00,411.54 L667.50,411.14 L670.00,411.12 L672.50,411.74 L675.00,411.35 L677.50,411.17 L680.00,411.40 L682.50,411.38 L685.00,411.65 L687.50,410.87 L690.00,411.97 L692.50,410.83 L695.00,411.70 L697.50,411.81 L700.00,411.40 L702.87,410.36 L705.73,410.81 L708.60,410.00 L712.50,406.20 L716.20,408.80 L718.70,408.64 L721.20,408.89 L723.70,408.80 L726.95,408.81 L730.20,410.00 L732.72,409.19 L735.23,409.08 L737.75,409.75 L740.27,408.57 L742.78,408.97 L745.30,408.40 L747.97,409.19 L750.65,409.48 L753.33,409.04 L756.00,409.50 L758.90,408.16 L761.80,407.20 L764.70,406.00 L767.38,407.58 L770.05,408.03 L772.73,410.05 L775.40,411.00 L778.10,411.36 L780.80,411.43 L783.50,410.44 L786.20,411.53 L788.90,410.51 L791.60,410.81 L794.30,411.13 L797.00,411.50 L799.70,410.81 L802.40,411.51 L805.10,411.05 L807.80,411.00 L810.67,410.94 L813.53,411.11 L816.40,411.11 L819.27,411.16 L822.13,411.41 L825.00,412.00 L827.59,412.13 L830.18,412.40 L832.77,411.29 L835.36,411.06 L837.95,412.08 L840.54,411.44 L843.13,411.19 L845.72,410.88 L848.31,411.21 L850.90,411.00 L853.48,411.59 L856.06,411.35 L858.64,411.51 L861.22,411.27 L863.80,412.00 L866.67,411.93 L869.53,410.31 L872.40,410.30 L875.20,410.52 L878.00,411.16 L880.80,410.53 L883.60,411.20 L883.60,457.80 L520.00,457.80 Z" fill="#6f631f" stroke="none" stroke-width="1"/>
<rect x="520.0" y="336.70" width="363.6" height="1" fill="rgba(204,204,220,0.12)"/>
<rect x="520.0" y="397.00" width="363.6" height="1" fill="rgba(204,204,220,0.12)"/>
<rect x="558.00" y="309.5" width="1" height="152" fill="rgba(204,204,220,0.12)"/>
<rect x="618.90" y="309.5" width="1" height="152" fill="rgba(204,204,220,0.12)"/>
<rect x="679.80" y="309.5" width="1" height="152" fill="rgba(204,204,220,0.12)"/>
<rect x="740.70" y="309.5" width="1" height="152" fill="rgba(204,204,220,0.12)"/>
<rect x="801.60" y="309.5" width="1" height="152" fill="rgba(204,204,220,0.12)"/>
<rect x="862.50" y="309.5" width="1" height="152" fill="rgba(204,204,220,0.12)"/>
<path d="M520.00,364.70 L523.00,365.48 L526.00,365.88 L529.00,365.80 L531.68,365.87 L534.36,365.65 L537.05,365.37 L539.73,366.39 L542.41,366.21 L545.09,366.71 L547.77,366.26 L550.45,366.91 L553.14,366.30 L555.82,367.13 L558.50,366.80 L561.06,367.14 L563.62,366.72 L566.19,366.92 L568.75,367.14 L571.31,366.47 L573.88,367.00 L576.44,367.37 L579.00,366.64 L581.56,367.41 L584.12,367.27 L586.69,367.51 L589.25,366.82 L591.81,366.50 L594.38,367.51 L596.94,367.54 L599.50,367.06 L602.06,366.59 L604.62,366.75 L607.19,367.38 L609.75,366.92 L612.31,367.87 L614.88,367.38 L617.44,366.86 L620.00,367.30 L622.50,367.51 L625.00,367.08 L627.50,367.87 L630.00,367.82 L632.50,367.26 L635.00,367.43 L637.50,367.49 L640.00,367.63 L642.50,367.85 L645.00,366.51 L647.50,366.97 L650.00,367.29 L652.50,366.86 L655.00,367.25 L657.50,366.54 L660.00,367.63 L662.50,367.12 L665.00,366.54 L667.50,367.29 L670.00,366.79 L672.50,366.61 L675.00,367.00 L677.50,366.51 L680.00,367.00 L682.50,366.57 L685.00,367.46 L687.50,367.20 L690.00,366.22 L692.50,367.26 L695.00,366.17 L697.50,366.59 L700.00,366.80 L702.87,366.67 L705.73,365.57 L708.60,364.70 L711.90,362.00 L715.00,363.60 L717.60,363.33 L720.20,363.43 L722.80,363.44 L725.40,363.08 L728.00,364.30 L730.60,362.98 L733.20,363.49 L735.80,363.94 L738.40,363.46 L741.00,363.60 L743.87,361.91 L746.73,358.51 L749.60,356.50 L752.12,356.37 L754.63,355.45 L757.15,354.34 L759.67,353.85 L762.18,352.43 L764.70,351.70 L767.38,353.14 L770.05,354.06 L772.73,354.65 L775.40,355.60 L777.92,355.09 L780.43,354.95 L782.95,354.07 L785.47,353.15 L787.98,353.61 L790.50,352.80 L793.19,352.47 L795.88,352.78 L798.56,353.20 L801.25,352.34 L803.94,352.13 L806.62,352.27 L809.31,352.93 L812.00,352.80 L814.88,352.97 L817.77,353.19 L820.65,353.83 L823.53,354.87 L826.42,354.29 L829.30,355.00 L832.18,355.76 L835.07,357.30 L837.95,357.81 L840.83,358.21 L843.72,359.38 L846.60,360.30 L849.47,360.45 L852.33,360.17 L855.20,360.68 L858.07,360.76 L860.93,361.64 L863.80,361.40 L866.67,360.95 L869.53,361.22 L872.40,360.80 L875.20,361.61 L878.00,361.69 L880.80,361.08 L883.60,361.40" fill="none" stroke="#1b3658" stroke-width="1.2"/>
<path d="M520.00,412.10 L522.90,411.40 L525.80,410.40 L528.50,411.34 L531.20,411.70 L533.96,412.01 L536.72,412.15 L539.48,411.87 L542.24,412.05 L545.00,411.50 L547.62,410.89 L550.23,411.38 L552.85,411.91 L555.47,411.51 L558.08,411.77 L560.70,410.79 L563.32,411.17 L565.93,410.86 L568.55,411.18 L571.17,411.17 L573.78,410.46 L576.40,411.00 L579.02,410.72 L581.64,410.85 L584.27,411.67 L586.89,411.54 L589.51,410.87 L592.13,411.69 L594.76,410.96 L597.38,411.59 L600.00,411.50 L602.50,411.03 L605.00,410.86 L607.50,411.89 L610.00,411.08 L612.50,411.06 L615.00,411.97 L617.50,411.82 L620.00,411.10 L622.50,411.89 L625.00,411.36 L627.50,411.51 L630.00,410.92 L632.50,411.79 L635.00,411.47 L637.50,411.78 L640.00,411.20 L642.50,411.68 L645.00,410.98 L647.50,411.07 L650.00,410.85 L652.50,410.84 L655.00,410.75 L657.50,411.05 L660.00,411.42 L662.50,410.72 L665.00,411.54 L667.50,411.14 L670.00,411.12 L672.50,411.74 L675.00,411.35 L677.50,411.17 L680.00,411.40 L682.50,411.38 L685.00,411.65 L687.50,410.87 L690.00,411.97 L692.50,410.83 L695.00,411.70 L697.50,411.81 L700.00,411.40 L702.87,410.36 L705.73,410.81 L708.60,410.00 L712.50,406.20 L716.20,408.80 L718.70,408.64 L721.20,408.89 L723.70,408.80 L726.95,408.81 L730.20,410.00 L732.72,409.19 L735.23,409.08 L737.75,409.75 L740.27,408.57 L742.78,408.97 L745.30,408.40 L747.97,409.19 L750.65,409.48 L753.33,409.04 L756.00,409.50 L758.90,408.16 L761.80,407.20 L764.70,406.00 L767.38,407.58 L770.05,408.03 L772.73,410.05 L775.40,411.00 L778.10,411.36 L780.80,411.43 L783.50,410.44 L786.20,411.53 L788.90,410.51 L791.60,410.81 L794.30,411.13 L797.00,411.50 L799.70,410.81 L802.40,411.51 L805.10,411.05 L807.80,411.00 L810.67,410.94 L813.53,411.11 L816.40,411.11 L819.27,411.16 L822.13,411.41 L825.00,412.00 L827.59,412.13 L830.18,412.40 L832.77,411.29 L835.36,411.06 L837.95,412.08 L840.54,411.44 L843.13,411.19 L845.72,410.88 L848.31,411.21 L850.90,411.00 L853.48,411.59 L856.06,411.35 L858.64,411.51 L861.22,411.27 L863.80,412.00 L866.67,411.93 L869.53,410.31 L872.40,410.30 L875.20,410.52 L878.00,411.16 L880.80,410.53 L883.60,411.20" fill="none" stroke="#d8c03a" stroke-width="1.3"/>
<rect x="520.0" y="339.6" width="363.6" height="1.4" fill="#e9e3c4"/>
<rect x="520.0" y="324.3" width="363.6" height="1.1" fill="#b8392a"/>
<text x="515.00" y="341.50" font-size="12.5" fill="#c4c4cc" stroke="#c4c4cc" stroke-width="0.12" text-anchor="end" textLength="43.00" lengthAdjust="spacingAndGlyphs">128 GiB</text>
<text x="515.00" y="401.80" font-size="12.5" fill="#c4c4cc" stroke="#c4c4cc" stroke-width="0.12" text-anchor="end" textLength="38.00" lengthAdjust="spacingAndGlyphs">64 GiB</text>
<text x="515.00" y="462.10" font-size="12.5" fill="#c4c4cc" stroke="#c4c4cc" stroke-width="0.12" text-anchor="end" textLength="18.50" lengthAdjust="spacingAndGlyphs">0 B</text>
<text x="558.50" y="475.70" font-size="12.5" fill="#c4c4cc" stroke="#c4c4cc" stroke-width="0.12" text-anchor="middle" textLength="30.50" lengthAdjust="spacingAndGlyphs">01:30</text>
<text x="619.40" y="475.70" font-size="12.5" fill="#c4c4cc" stroke="#c4c4cc" stroke-width="0.12" text-anchor="middle" textLength="30.50" lengthAdjust="spacingAndGlyphs">01:40</text>
<text x="680.30" y="475.70" font-size="12.5" fill="#c4c4cc" stroke="#c4c4cc" stroke-width="0.12" text-anchor="middle" textLength="30.50" lengthAdjust="spacingAndGlyphs">01:50</text>
<text x="741.20" y="475.70" font-size="12.5" fill="#c4c4cc" stroke="#c4c4cc" stroke-width="0.12" text-anchor="middle" textLength="30.50" lengthAdjust="spacingAndGlyphs">02:00</text>
<text x="802.10" y="475.70" font-size="12.5" fill="#c4c4cc" stroke="#c4c4cc" stroke-width="0.12" text-anchor="middle" textLength="30.50" lengthAdjust="spacingAndGlyphs">02:10</text>
<text x="863.00" y="475.70" font-size="12.5" fill="#c4c4cc" stroke="#c4c4cc" stroke-width="0.12" text-anchor="middle" textLength="30.50" lengthAdjust="spacingAndGlyphs">02:20</text>
<rect x="471.2" y="490.80" width="13.5" height="4" rx="2" fill="#f3f0da"/>
<text x="493.20" y="497.20" font-size="12.5" fill="#c4c4cc" stroke="#c4c4cc" stroke-width="0.12" textLength="58.10" lengthAdjust="spacingAndGlyphs">RAM Total</text>
<rect x="562.4" y="490.80" width="13.5" height="4" rx="2" fill="#f2cc0c"/>
<text x="584.40" y="497.20" font-size="12.5" fill="#c4c4cc" stroke="#c4c4cc" stroke-width="0.12" textLength="59.10" lengthAdjust="spacingAndGlyphs">RAM Used</text>
<rect x="654.5" y="490.80" width="13.5" height="4" rx="2" fill="#0d2b55"/>
<text x="676.30" y="497.20" font-size="12.5" fill="#c4c4cc" stroke="#c4c4cc" stroke-width="0.12" textLength="117.20" lengthAdjust="spacingAndGlyphs">RAM Cache + Buffer</text>
<rect x="471.2" y="514.80" width="13.5" height="4" rx="2" fill="#7eb26d"/>
<text x="493.20" y="521.20" font-size="12.5" fill="#c4c4cc" stroke="#c4c4cc" stroke-width="0.12" textLength="55.40" lengthAdjust="spacingAndGlyphs">RAM Free</text>
<rect x="559" y="514.80" width="13.5" height="4" rx="2" fill="#c4291e"/>
<text x="581.00" y="521.20" font-size="12.5" fill="#c4c4cc" stroke="#c4c4cc" stroke-width="0.12" textLength="67.60" lengthAdjust="spacingAndGlyphs">SWAP Used</text>
<rect x="910.50" y="292.50" width="442.00" height="257.00" rx="1.5" fill="#181b1f" stroke="#2c2e33" stroke-width="1"/>
<rect x="7.50" y="558.50" width="442.00" height="257.00" rx="1.5" fill="#181b1f" stroke="#2c2e33" stroke-width="1"/>
<rect x="84.0" y="593.85" width="348.7" height="1" fill="rgba(204,204,220,0.12)"/>
<rect x="84.0" y="655.75" width="348.7" height="1" fill="rgba(204,204,220,0.12)"/>
<rect x="84.0" y="686.70" width="348.7" height="1" fill="rgba(204,204,220,0.12)"/>
<rect x="84.0" y="717.65" width="348.7" height="1" fill="rgba(204,204,220,0.12)"/>
<rect x="84.0" y="748.60" width="348.7" height="1" fill="rgba(204,204,220,0.12)"/>
<rect x="84.0" y="779.55" width="348.7" height="1" fill="rgba(204,204,220,0.12)"/>
<rect x="120.90" y="575.5" width="1" height="213.5" fill="rgba(204,204,220,0.12)"/>
<rect x="179.00" y="575.5" width="1" height="213.5" fill="rgba(204,204,220,0.12)"/>
<rect x="237.10" y="575.5" width="1" height="213.5" fill="rgba(204,204,220,0.12)"/>
<rect x="295.20" y="575.5" width="1" height="213.5" fill="rgba(204,204,220,0.12)"/>
<rect x="353.30" y="575.5" width="1" height="213.5" fill="rgba(204,204,220,0.12)"/>
<rect x="411.40" y="575.5" width="1" height="213.5" fill="rgba(204,204,220,0.12)"/>
<path d="M84.00,664.30 L87.00,659.20 L88.72,661.14 L90.44,663.09 L92.16,666.79 L93.88,667.69 L95.60,671.20 L97.55,670.49 L99.50,669.25 L101.45,667.65 L103.40,668.00 L105.55,663.52 L107.70,659.00 L110.20,661.40 L112.70,666.20 L114.65,665.33 L116.60,663.68 L118.55,663.04 L120.50,663.40 L122.45,662.43 L124.40,662.70 L126.35,660.10 L128.30,660.30 L130.04,661.39 L131.79,664.26 L133.53,666.91 L135.27,667.76 L137.01,669.10 L138.76,672.42 L140.50,673.00 L142.67,668.89 L144.83,668.07 L147.00,664.20 L149.07,663.39 L151.13,662.74 L153.20,663.40 L154.95,664.36 L156.70,666.80 L158.45,670.07 L160.20,671.20 L162.00,668.80 L163.80,668.28 L165.60,666.50 L167.30,665.49 L169.00,663.42 L170.70,662.50 L172.40,661.00 L174.10,660.82 L175.80,661.77 L177.50,663.11 L179.20,665.30 L180.90,665.60 L182.60,666.26 L184.30,667.70 L186.34,667.24 L188.38,666.22 L190.42,665.14 L192.46,665.75 L194.50,664.30 L196.22,666.53 L197.93,667.07 L199.65,669.64 L201.37,671.23 L203.08,673.86 L204.80,674.60 L206.84,673.14 L208.88,669.93 L210.92,669.67 L212.96,665.37 L215.00,664.30 L216.71,664.61 L218.42,666.01 L220.13,664.96 L221.84,666.35 L223.55,665.70 L225.26,667.86 L226.97,668.63 L228.68,668.65 L230.39,669.96 L232.10,669.50 L233.80,667.80 L235.50,667.58 L237.20,666.10 L238.90,664.85 L240.60,663.31 L242.30,663.10 L244.00,661.00 L245.71,664.16 L247.43,664.93 L249.14,667.43 L250.85,667.86 L252.56,671.52 L254.27,673.38 L255.99,676.28 L257.70,677.00 L259.52,674.59 L261.33,669.94 L263.15,666.95 L264.97,664.44 L266.78,659.51 L268.60,657.50 L270.80,668.15 L273.00,679.00 L274.73,672.14 L276.47,666.00 L278.20,661.00 L280.12,661.67 L282.03,665.33 L283.95,665.49 L285.87,667.61 L287.78,669.80 L289.70,671.90 L291.50,671.07 L293.30,667.21 L295.10,666.50 L297.30,669.40 L299.45,666.42 L301.60,663.70 L303.75,666.88 L305.90,669.80 L308.05,671.85 L310.20,671.90 L312.00,673.46 L313.80,674.31 L315.60,674.10 L317.70,678.40 L319.55,665.97 L321.40,654.70 L323.90,670.63 L326.40,687.00 L328.20,675.33 L330.00,664.40 L332.17,664.17 L334.33,663.12 L336.50,660.70 L338.75,677.04 L341.00,695.20 L343.05,680.01 L345.10,666.50 L346.85,670.70 L348.60,676.30 L350.40,718.16 L352.20,761.40 L354.05,734.41 L355.90,707.50 L357.65,685.83 L359.40,663.70 L361.12,663.96 L362.85,664.16 L364.57,666.11 L366.30,667.20 L368.02,666.00 L369.74,665.65 L371.46,665.80 L373.18,664.26 L374.90,662.90 L377.03,663.81 L379.17,664.94 L381.30,665.50 L383.04,664.44 L384.78,661.30 L386.52,661.98 L388.26,660.15 L390.00,657.90 L392.13,659.97 L394.27,660.87 L396.40,661.20 L398.14,660.48 L399.88,660.06 L401.62,658.85 L403.36,659.79 L405.10,659.00 L407.25,660.01 L409.40,663.30 L411.55,667.03 L413.70,673.00 L415.65,666.34 L417.60,661.20 L419.95,663.77 L422.30,668.10 L424.47,666.45 L426.63,664.47 L428.80,664.40 L430.75,660.60 L432.70,659.40 L432.70,625.30 L84.00,625.30 Z" fill="rgba(87,148,242,0.38)" stroke="none" stroke-width="1"/>
<path d="M84.00,624.30 L297.30,624.30 L301.60,599.00 L305.90,624.30 L325.00,624.30 L326.40,622.30 L328.00,624.30 L349.00,624.30 L351.20,622.30 L354.00,622.80 L357.20,619.10 L361.50,624.30 L432.70,624.30 L432.70,624.30 L84.00,624.30 Z" fill="rgba(115,191,105,0.5)" stroke="none" stroke-width="1"/>
<path d="M84.00,664.30 L87.00,659.20 L88.72,661.14 L90.44,663.09 L92.16,666.79 L93.88,667.69 L95.60,671.20 L97.55,670.49 L99.50,669.25 L101.45,667.65 L103.40,668.00 L105.55,663.52 L107.70,659.00 L110.20,661.40 L112.70,666.20 L114.65,665.33 L116.60,663.68 L118.55,663.04 L120.50,663.40 L122.45,662.43 L124.40,662.70 L126.35,660.10 L128.30,660.30 L130.04,661.39 L131.79,664.26 L133.53,666.91 L135.27,667.76 L137.01,669.10 L138.76,672.42 L140.50,673.00 L142.67,668.89 L144.83,668.07 L147.00,664.20 L149.07,663.39 L151.13,662.74 L153.20,663.40 L154.95,664.36 L156.70,666.80 L158.45,670.07 L160.20,671.20 L162.00,668.80 L163.80,668.28 L165.60,666.50 L167.30,665.49 L169.00,663.42 L170.70,662.50 L172.40,661.00 L174.10,660.82 L175.80,661.77 L177.50,663.11 L179.20,665.30 L180.90,665.60 L182.60,666.26 L184.30,667.70 L186.34,667.24 L188.38,666.22 L190.42,665.14 L192.46,665.75 L194.50,664.30 L196.22,666.53 L197.93,667.07 L199.65,669.64 L201.37,671.23 L203.08,673.86 L204.80,674.60 L206.84,673.14 L208.88,669.93 L210.92,669.67 L212.96,665.37 L215.00,664.30 L216.71,664.61 L218.42,666.01 L220.13,664.96 L221.84,666.35 L223.55,665.70 L225.26,667.86 L226.97,668.63 L228.68,668.65 L230.39,669.96 L232.10,669.50 L233.80,667.80 L235.50,667.58 L237.20,666.10 L238.90,664.85 L240.60,663.31 L242.30,663.10 L244.00,661.00 L245.71,664.16 L247.43,664.93 L249.14,667.43 L250.85,667.86 L252.56,671.52 L254.27,673.38 L255.99,676.28 L257.70,677.00 L259.52,674.59 L261.33,669.94 L263.15,666.95 L264.97,664.44 L266.78,659.51 L268.60,657.50 L270.80,668.15 L273.00,679.00 L274.73,672.14 L276.47,666.00 L278.20,661.00 L280.12,661.67 L282.03,665.33 L283.95,665.49 L285.87,667.61 L287.78,669.80 L289.70,671.90 L291.50,671.07 L293.30,667.21 L295.10,666.50 L297.30,669.40 L299.45,666.42 L301.60,663.70 L303.75,666.88 L305.90,669.80 L308.05,671.85 L310.20,671.90 L312.00,673.46 L313.80,674.31 L315.60,674.10 L317.70,678.40 L319.55,665.97 L321.40,654.70 L323.90,670.63 L326.40,687.00 L328.20,675.33 L330.00,664.40 L332.17,664.17 L334.33,663.12 L336.50,660.70 L338.75,677.04 L341.00,695.20 L343.05,680.01 L345.10,666.50 L346.85,670.70 L348.60,676.30 L350.40,718.16 L352.20,761.40 L354.05,734.41 L355.90,707.50 L357.65,685.83 L359.40,663.70 L361.12,663.96 L362.85,664.16 L364.57,666.11 L366.30,667.20 L368.02,666.00 L369.74,665.65 L371.46,665.80 L373.18,664.26 L374.90,662.90 L377.03,663.81 L379.17,664.94 L381.30,665.50 L383.04,664.44 L384.78,661.30 L386.52,661.98 L388.26,660.15 L390.00,657.90 L392.13,659.97 L394.27,660.87 L396.40,661.20 L398.14,660.48 L399.88,660.06 L401.62,658.85 L403.36,659.79 L405.10,659.00 L407.25,660.01 L409.40,663.30 L411.55,667.03 L413.70,673.00 L415.65,666.34 L417.60,661.20 L419.95,663.77 L422.30,668.10 L424.47,666.45 L426.63,664.47 L428.80,664.40 L430.75,660.60 L432.70,659.40" fill="none" stroke="#5a93ee" stroke-width="1.15" stroke-linejoin="round"/>
<path d="M84.00,624.30 L297.30,624.30 L301.60,599.00 L305.90,624.30 L325.00,624.30 L326.40,622.30 L328.00,624.30 L349.00,624.30 L351.20,622.30 L354.00,622.80 L357.20,619.10 L361.50,624.30 L432.70,624.30" fill="none" stroke="#73bf69" stroke-width="1.9" stroke-linejoin="round"/>
<text x="78.50" y="598.65" font-size="12.5" fill="#c4c4cc" stroke="#c4c4cc" stroke-width="0.12" text-anchor="end">25 Mb/s</text>
<text x="78.50" y="629.60" font-size="12.5" fill="#c4c4cc" stroke="#c4c4cc" stroke-width="0.12" text-anchor="end">0 b/s</text>
<text x="78.50" y="660.55" font-size="12.5" fill="#c4c4cc" stroke="#c4c4cc" stroke-width="0.12" text-anchor="end">-25 Mb/s</text>
<text x="78.50" y="691.50" font-size="12.5" fill="#c4c4cc" stroke="#c4c4cc" stroke-width="0.12" text-anchor="end">-50 Mb/s</text>
<text x="78.50" y="722.45" font-size="12.5" fill="#c4c4cc" stroke="#c4c4cc" stroke-width="0.12" text-anchor="end">-75 Mb/s</text>
<text x="78.50" y="753.40" font-size="12.5" fill="#c4c4cc" stroke="#c4c4cc" stroke-width="0.12" text-anchor="end">-100 Mb/s</text>
<text x="78.50" y="784.35" font-size="12.5" fill="#c4c4cc" stroke="#c4c4cc" stroke-width="0.12" text-anchor="end">-125 Mb/s</text>
<text x="121.40" y="805.00" font-size="12.5" fill="#c4c4cc" stroke="#c4c4cc" stroke-width="0.12" text-anchor="middle" textLength="30.50" lengthAdjust="spacingAndGlyphs">01:30</text>
<text x="179.50" y="805.00" font-size="12.5" fill="#c4c4cc" stroke="#c4c4cc" stroke-width="0.12" text-anchor="middle" textLength="30.50" lengthAdjust="spacingAndGlyphs">01:40</text>
<text x="237.60" y="805.00" font-size="12.5" fill="#c4c4cc" stroke="#c4c4cc" stroke-width="0.12" text-anchor="middle" textLength="30.50" lengthAdjust="spacingAndGlyphs">01:50</text>
<text x="295.70" y="805.00" font-size="12.5" fill="#c4c4cc" stroke="#c4c4cc" stroke-width="0.12" text-anchor="middle" textLength="30.50" lengthAdjust="spacingAndGlyphs">02:00</text>
<text x="353.80" y="805.00" font-size="12.5" fill="#c4c4cc" stroke="#c4c4cc" stroke-width="0.12" text-anchor="middle" textLength="30.50" lengthAdjust="spacingAndGlyphs">02:10</text>
<text x="411.90" y="805.00" font-size="12.5" fill="#c4c4cc" stroke="#c4c4cc" stroke-width="0.12" text-anchor="middle" textLength="30.50" lengthAdjust="spacingAndGlyphs">02:20</text>
<rect x="458.50" y="558.50" width="442.00" height="257.00" rx="1.5" fill="#181b1f" stroke="#2c2e33" stroke-width="1"/>
<text x="473.30" y="587.00" font-size="14.5" fill="#ccccdc" stroke="#ccccdc" stroke-width="0.3" textLength="33.20" lengthAdjust="spacingAndGlyphs">drive</text>
<text x="579.70" y="587.00" font-size="14.5" fill="#ccccdc" stroke="#ccccdc" stroke-width="0.3" textLength="26.30" lengthAdjust="spacingAndGlyphs">size</text>
<text x="685.50" y="587.00" font-size="14.5" fill="#ccccdc" stroke="#ccccdc" stroke-width="0.3" textLength="83.50" lengthAdjust="spacingAndGlyphs">temperature</text>
<text x="792.30" y="587.00" font-size="14.5" fill="#ccccdc" stroke="#ccccdc" stroke-width="0.3" textLength="36.70" lengthAdjust="spacingAndGlyphs">Value</text>
<rect x="466.8" y="595.1" width="425.2" height="1" fill="#2c2e33"/>
<rect x="466.8" y="638.7" width="425.2" height="1" fill="#2c2e33"/>
<rect x="572.0" y="596" width="1" height="86.6" fill="#2c2e33"/>
<rect x="678.9" y="596" width="1" height="86.6" fill="#2c2e33"/>
<rect x="785.0" y="596" width="1" height="86.6" fill="#2c2e33"/>
<text x="473.30" y="623.40" font-size="14.5" fill="#68b35e" stroke="#68b35e" stroke-width="0.1" textLength="33.20" lengthAdjust="spacingAndGlyphs">1l:1:3</text>
<text x="579.70" y="623.40" font-size="14.5" fill="#68b35e" stroke="#68b35e" stroke-width="0.1" textLength="40.60" lengthAdjust="spacingAndGlyphs">1.9 TB</text>
<text x="685.50" y="623.40" font-size="14.5" fill="#68b35e" stroke="#68b35e" stroke-width="0.1" textLength="16.50" lengthAdjust="spacingAndGlyphs">39</text>
<text x="792.30" y="623.40" font-size="14.5" fill="#68b35e" stroke="#68b35e" stroke-width="0.1" textLength="18.50" lengthAdjust="spacingAndGlyphs">OK</text>
<text x="473.30" y="667.40" font-size="14.5" fill="#68b35e" stroke="#68b35e" stroke-width="0.1" textLength="33.20" lengthAdjust="spacingAndGlyphs">1l:1:4</text>
<text x="579.70" y="667.40" font-size="14.5" fill="#68b35e" stroke="#68b35e" stroke-width="0.1" textLength="40.60" lengthAdjust="spacingAndGlyphs">1.9 TB</text>
<text x="685.50" y="667.40" font-size="14.5" fill="#68b35e" stroke="#68b35e" stroke-width="0.1" textLength="16.50" lengthAdjust="spacingAndGlyphs">39</text>
<text x="792.30" y="667.40" font-size="14.5" fill="#68b35e" stroke="#68b35e" stroke-width="0.1" textLength="18.50" lengthAdjust="spacingAndGlyphs">OK</text>
<rect x="911.00" y="559.00" width="103.00" height="66.00" rx="1.5" fill="url(#gdg)"/>
<text x="961.60" y="605.20" font-size="37.5" fill="#ffffff" stroke="#ffffff" stroke-width="0.5" text-anchor="middle" textLength="81.60" lengthAdjust="spacingAndGlyphs">RAID</text>
<rect x="1024.00" y="559.00" width="328.00" height="66.00" rx="1.5" fill="#73bf69"/>
<rect x="1035.2" y="586.2" width="3.5" height="17.6" fill="#ffffff"/>
<circle cx="1036.9" cy="580.9" r="2.1" fill="#ffffff"/>
<rect x="1072" y="600" width="3.10" height="10.7" fill="#ffffff"/>
<rect x="1193.4" y="600" width="3.70" height="10.7" fill="#ffffff"/>
<rect x="1129.8" y="581.5" width="3.5" height="6" fill="#ffffff"/>
<rect x="1149.8" y="579.7" width="3.5" height="6" fill="#ffffff"/>
<rect x="1170.4" y="581.5" width="3.5" height="6" fill="#ffffff"/>
<rect x="1182.7" y="581.5" width="3.5" height="6" fill="#ffffff"/>
<path d="M1340.3,603.8 L1340.3,592.5 A4.5,4.5 0 0 0 1331.5,591.5" fill="none" stroke="#ffffff" stroke-width="3.4"/>
<rect x="1039.3" y="583.8" width="294.7" height="21" rx="10.5" fill="#99cf8f" filter="url(#blur1)"/>
<rect x="911.00" y="635.00" width="103.00" height="66.00" rx="1.5" fill="url(#gld)"/>
<text x="962.50" y="664.00" font-size="15" fill="#ffffff" stroke="#ffffff" stroke-width="0.3" text-anchor="middle" textLength="47.00" lengthAdjust="spacingAndGlyphs">Logical</text>
<text x="962.50" y="680.50" font-size="15" fill="#ffffff" stroke="#ffffff" stroke-width="0.3" text-anchor="middle" textLength="33.50" lengthAdjust="spacingAndGlyphs">Drive</text>
<rect x="1023.50" y="634.50" width="329.00" height="67.00" rx="1.5" fill="#181b1f" stroke="#2c2e33" stroke-width="1"/>
<path d="M1023.50,683.00 C1023.90,683.01 1025.10,682.72 1025.90,683.08 C1026.70,683.44 1027.50,685.00 1028.30,685.17 C1029.10,685.35 1029.90,684.07 1030.70,684.13 C1031.50,684.18 1032.28,684.82 1033.10,685.50 C1033.92,686.18 1034.78,687.60 1035.62,688.23 C1036.47,688.87 1037.31,688.70 1038.15,689.32 C1038.99,689.94 1039.83,691.06 1040.67,691.97 C1041.52,692.88 1042.36,694.07 1043.20,694.80 C1044.04,695.53 1044.89,696.27 1045.73,696.36 C1046.58,696.46 1047.42,695.33 1048.27,695.35 C1049.11,695.37 1049.89,696.18 1050.80,696.50 C1051.71,696.82 1052.76,697.13 1053.73,697.28 C1054.71,697.44 1055.69,697.30 1056.67,697.42 C1057.64,697.54 1058.74,698.13 1059.60,698.00 C1060.46,697.87 1061.07,697.07 1061.80,696.66 C1062.53,696.24 1063.27,695.99 1064.00,695.49 C1064.73,694.99 1065.47,694.05 1066.20,693.63 C1066.93,693.22 1067.61,693.24 1068.40,693.00 C1069.19,692.76 1070.08,692.83 1070.93,692.21 C1071.77,691.59 1072.61,689.96 1073.45,689.28 C1074.29,688.60 1075.13,688.46 1075.97,688.12 C1076.82,687.77 1077.55,687.57 1078.50,687.20 C1079.45,686.83 1080.60,686.01 1081.65,685.89 C1082.70,685.77 1083.79,686.23 1084.80,686.50 C1085.81,686.77 1086.76,687.06 1087.73,687.53 C1088.71,688.00 1089.69,688.74 1090.67,689.32 C1091.64,689.89 1092.69,690.46 1093.60,691.00 C1094.51,691.54 1095.28,692.34 1096.12,692.55 C1096.97,692.76 1097.81,692.27 1098.65,692.26 C1099.49,692.25 1100.33,692.19 1101.17,692.48 C1102.02,692.77 1102.86,693.69 1103.70,694.00 C1104.54,694.31 1105.38,693.90 1106.22,694.34 C1107.07,694.78 1107.91,696.42 1108.75,696.63 C1109.59,696.84 1110.43,695.49 1111.28,695.60 C1112.12,695.71 1112.85,697.13 1113.80,697.30 C1114.75,697.47 1115.90,696.94 1116.95,696.64 C1118.00,696.34 1119.21,696.50 1120.10,695.50 C1120.99,694.50 1121.57,692.13 1122.30,690.65 C1123.03,689.17 1123.77,688.17 1124.50,686.62 C1125.23,685.08 1125.97,682.96 1126.70,681.38 C1127.43,679.79 1128.11,677.98 1128.90,677.10 C1129.69,676.22 1130.58,676.57 1131.43,676.11 C1132.27,675.65 1133.11,674.82 1133.95,674.35 C1134.79,673.87 1135.63,673.73 1136.47,673.27 C1137.32,672.82 1138.16,671.58 1139.00,671.60 C1139.84,671.62 1140.67,673.04 1141.50,673.40 C1142.33,673.76 1143.17,673.56 1144.00,673.76 C1144.83,673.96 1145.66,673.77 1146.50,674.60 C1147.34,675.43 1148.18,677.26 1149.03,678.73 C1149.87,680.21 1150.71,681.54 1151.55,683.43 C1152.39,685.31 1153.23,688.28 1154.07,690.04 C1154.92,691.80 1155.76,693.12 1156.60,694.00 C1157.44,694.88 1158.29,694.97 1159.13,695.31 C1159.98,695.65 1160.82,695.61 1161.67,696.05 C1162.51,696.50 1163.36,697.53 1164.20,698.00 C1165.04,698.47 1165.87,698.87 1166.70,698.89 C1167.53,698.92 1168.37,698.31 1169.20,698.16 C1170.03,698.01 1170.86,698.31 1171.70,698.00 C1172.54,697.69 1173.39,696.89 1174.23,696.29 C1175.08,695.70 1175.92,695.23 1176.77,694.43 C1177.61,693.63 1178.46,692.20 1179.30,691.50 C1180.14,690.80 1180.98,690.56 1181.82,690.24 C1182.66,689.91 1183.49,689.63 1184.33,689.55 C1185.17,689.47 1186.01,690.11 1186.85,689.76 C1187.69,689.40 1188.53,687.75 1189.37,687.44 C1190.21,687.12 1191.04,688.02 1191.88,687.86 C1192.72,687.71 1193.56,686.95 1194.40,686.50 C1195.24,686.05 1196.08,685.29 1196.92,685.18 C1197.76,685.07 1198.59,685.82 1199.43,685.85 C1200.27,685.88 1201.11,685.44 1201.95,685.35 C1202.79,685.27 1203.63,685.46 1204.47,685.33 C1205.31,685.21 1206.14,684.93 1206.98,684.60 C1207.82,684.28 1208.66,683.93 1209.50,683.40 C1210.34,682.87 1211.18,682.17 1212.03,681.41 C1212.87,680.64 1213.71,679.58 1214.55,678.80 C1215.39,678.01 1216.23,677.27 1217.07,676.70 C1217.92,676.13 1218.79,675.78 1219.60,675.40 C1220.41,675.02 1221.16,674.78 1221.94,674.44 C1222.72,674.11 1223.50,673.88 1224.29,673.39 C1225.07,672.90 1225.85,671.71 1226.63,671.50 C1227.41,671.29 1228.19,672.34 1228.97,672.15 C1229.75,671.96 1230.53,670.75 1231.31,670.34 C1232.10,669.94 1232.88,670.06 1233.66,669.72 C1234.44,669.38 1235.23,668.39 1236.00,668.30 C1236.77,668.21 1237.51,668.77 1238.26,669.16 C1239.01,669.55 1239.77,670.22 1240.52,670.63 C1241.27,671.03 1242.03,671.08 1242.78,671.58 C1243.53,672.09 1244.29,673.03 1245.04,673.67 C1245.79,674.30 1246.50,674.91 1247.30,675.40 C1248.10,675.89 1248.98,676.09 1249.83,676.63 C1250.67,677.17 1251.51,678.04 1252.35,678.65 C1253.19,679.25 1254.03,679.66 1254.88,680.25 C1255.72,680.85 1256.45,681.97 1257.40,682.20 C1258.35,682.43 1259.50,682.04 1260.55,681.62 C1261.60,681.20 1262.65,679.79 1263.70,679.70 C1264.75,679.61 1265.80,680.88 1266.85,681.08 C1267.90,681.28 1269.05,681.25 1270.00,680.90 C1270.95,680.55 1271.69,679.44 1272.53,678.98 C1273.38,678.53 1274.22,678.47 1275.07,678.16 C1275.91,677.85 1276.54,676.84 1277.60,677.10 C1278.66,677.36 1280.23,680.12 1281.40,679.70 C1282.57,679.28 1283.60,675.14 1284.60,674.60 C1285.60,674.06 1286.47,675.63 1287.40,676.48 C1288.33,677.33 1289.32,678.97 1290.20,679.70 C1291.08,680.43 1291.87,680.42 1292.70,680.86 C1293.53,681.30 1294.37,682.09 1295.20,682.32 C1296.03,682.54 1296.86,681.93 1297.70,682.20 C1298.54,682.47 1299.38,683.06 1300.22,683.93 C1301.07,684.79 1301.91,686.58 1302.75,687.38 C1303.59,688.19 1304.43,688.09 1305.28,688.78 C1306.12,689.46 1307.00,690.93 1307.80,691.50 C1308.60,692.07 1309.32,691.55 1310.08,692.19 C1310.84,692.83 1311.60,694.69 1312.36,695.35 C1313.12,696.01 1313.88,695.81 1314.64,696.16 C1315.40,696.52 1316.16,696.87 1316.92,697.48 C1317.68,698.09 1318.44,699.63 1319.20,699.80 C1319.96,699.97 1320.71,698.99 1321.46,698.51 C1322.21,698.04 1322.97,697.34 1323.72,696.94 C1324.47,696.55 1325.23,696.46 1325.98,696.14 C1326.73,695.82 1327.49,695.41 1328.24,695.05 C1328.99,694.70 1329.71,694.30 1330.50,694.00 C1331.29,693.70 1332.17,693.43 1333.00,693.27 C1333.83,693.11 1334.67,693.21 1335.50,693.04 C1336.33,692.88 1337.16,693.48 1338.00,692.30 C1338.84,691.12 1339.69,688.08 1340.53,685.98 C1341.38,683.88 1342.22,681.59 1343.07,679.69 C1343.91,677.79 1344.79,675.49 1345.60,674.60 C1346.41,673.71 1347.13,674.30 1347.90,674.37 C1348.67,674.44 1349.43,674.67 1350.20,675.01 C1350.97,675.35 1352.12,676.17 1352.50,676.40 L1352.50,701.30 L1023.50,701.30 Z" fill="rgba(242,73,92,0.22)" stroke="none" stroke-width="1"/>
<path d="M1023.50,683.00 C1023.90,683.01 1025.10,682.72 1025.90,683.08 C1026.70,683.44 1027.50,685.00 1028.30,685.17 C1029.10,685.35 1029.90,684.07 1030.70,684.13 C1031.50,684.18 1032.28,684.82 1033.10,685.50 C1033.92,686.18 1034.78,687.60 1035.62,688.23 C1036.47,688.87 1037.31,688.70 1038.15,689.32 C1038.99,689.94 1039.83,691.06 1040.67,691.97 C1041.52,692.88 1042.36,694.07 1043.20,694.80 C1044.04,695.53 1044.89,696.27 1045.73,696.36 C1046.58,696.46 1047.42,695.33 1048.27,695.35 C1049.11,695.37 1049.89,696.18 1050.80,696.50 C1051.71,696.82 1052.76,697.13 1053.73,697.28 C1054.71,697.44 1055.69,697.30 1056.67,697.42 C1057.64,697.54 1058.74,698.13 1059.60,698.00 C1060.46,697.87 1061.07,697.07 1061.80,696.66 C1062.53,696.24 1063.27,695.99 1064.00,695.49 C1064.73,694.99 1065.47,694.05 1066.20,693.63 C1066.93,693.22 1067.61,693.24 1068.40,693.00 C1069.19,692.76 1070.08,692.83 1070.93,692.21 C1071.77,691.59 1072.61,689.96 1073.45,689.28 C1074.29,688.60 1075.13,688.46 1075.97,688.12 C1076.82,687.77 1077.55,687.57 1078.50,687.20 C1079.45,686.83 1080.60,686.01 1081.65,685.89 C1082.70,685.77 1083.79,686.23 1084.80,686.50 C1085.81,686.77 1086.76,687.06 1087.73,687.53 C1088.71,688.00 1089.69,688.74 1090.67,689.32 C1091.64,689.89 1092.69,690.46 1093.60,691.00 C1094.51,691.54 1095.28,692.34 1096.12,692.55 C1096.97,692.76 1097.81,692.27 1098.65,692.26 C1099.49,692.25 1100.33,692.19 1101.17,692.48 C1102.02,692.77 1102.86,693.69 1103.70,694.00 C1104.54,694.31 1105.38,693.90 1106.22,694.34 C1107.07,694.78 1107.91,696.42 1108.75,696.63 C1109.59,696.84 1110.43,695.49 1111.28,695.60 C1112.12,695.71 1112.85,697.13 1113.80,697.30 C1114.75,697.47 1115.90,696.94 1116.95,696.64 C1118.00,696.34 1119.21,696.50 1120.10,695.50 C1120.99,694.50 1121.57,692.13 1122.30,690.65 C1123.03,689.17 1123.77,688.17 1124.50,686.62 C1125.23,685.08 1125.97,682.96 1126.70,681.38 C1127.43,679.79 1128.11,677.98 1128.90,677.10 C1129.69,676.22 1130.58,676.57 1131.43,676.11 C1132.27,675.65 1133.11,674.82 1133.95,674.35 C1134.79,673.87 1135.63,673.73 1136.47,673.27 C1137.32,672.82 1138.16,671.58 1139.00,671.60 C1139.84,671.62 1140.67,673.04 1141.50,673.40 C1142.33,673.76 1143.17,673.56 1144.00,673.76 C1144.83,673.96 1145.66,673.77 1146.50,674.60 C1147.34,675.43 1148.18,677.26 1149.03,678.73 C1149.87,680.21 1150.71,681.54 1151.55,683.43 C1152.39,685.31 1153.23,688.28 1154.07,690.04 C1154.92,691.80 1155.76,693.12 1156.60,694.00 C1157.44,694.88 1158.29,694.97 1159.13,695.31 C1159.98,695.65 1160.82,695.61 1161.67,696.05 C1162.51,696.50 1163.36,697.53 1164.20,698.00 C1165.04,698.47 1165.87,698.87 1166.70,698.89 C1167.53,698.92 1168.37,698.31 1169.20,698.16 C1170.03,698.01 1170.86,698.31 1171.70,698.00 C1172.54,697.69 1173.39,696.89 1174.23,696.29 C1175.08,695.70 1175.92,695.23 1176.77,694.43 C1177.61,693.63 1178.46,692.20 1179.30,691.50 C1180.14,690.80 1180.98,690.56 1181.82,690.24 C1182.66,689.91 1183.49,689.63 1184.33,689.55 C1185.17,689.47 1186.01,690.11 1186.85,689.76 C1187.69,689.40 1188.53,687.75 1189.37,687.44 C1190.21,687.12 1191.04,688.02 1191.88,687.86 C1192.72,687.71 1193.56,686.95 1194.40,686.50 C1195.24,686.05 1196.08,685.29 1196.92,685.18 C1197.76,685.07 1198.59,685.82 1199.43,685.85 C1200.27,685.88 1201.11,685.44 1201.95,685.35 C1202.79,685.27 1203.63,685.46 1204.47,685.33 C1205.31,685.21 1206.14,684.93 1206.98,684.60 C1207.82,684.28 1208.66,683.93 1209.50,683.40 C1210.34,682.87 1211.18,682.17 1212.03,681.41 C1212.87,680.64 1213.71,679.58 1214.55,678.80 C1215.39,678.01 1216.23,677.27 1217.07,676.70 C1217.92,676.13 1218.79,675.78 1219.60,675.40 C1220.41,675.02 1221.16,674.78 1221.94,674.44 C1222.72,674.11 1223.50,673.88 1224.29,673.39 C1225.07,672.90 1225.85,671.71 1226.63,671.50 C1227.41,671.29 1228.19,672.34 1228.97,672.15 C1229.75,671.96 1230.53,670.75 1231.31,670.34 C1232.10,669.94 1232.88,670.06 1233.66,669.72 C1234.44,669.38 1235.23,668.39 1236.00,668.30 C1236.77,668.21 1237.51,668.77 1238.26,669.16 C1239.01,669.55 1239.77,670.22 1240.52,670.63 C1241.27,671.03 1242.03,671.08 1242.78,671.58 C1243.53,672.09 1244.29,673.03 1245.04,673.67 C1245.79,674.30 1246.50,674.91 1247.30,675.40 C1248.10,675.89 1248.98,676.09 1249.83,676.63 C1250.67,677.17 1251.51,678.04 1252.35,678.65 C1253.19,679.25 1254.03,679.66 1254.88,680.25 C1255.72,680.85 1256.45,681.97 1257.40,682.20 C1258.35,682.43 1259.50,682.04 1260.55,681.62 C1261.60,681.20 1262.65,679.79 1263.70,679.70 C1264.75,679.61 1265.80,680.88 1266.85,681.08 C1267.90,681.28 1269.05,681.25 1270.00,680.90 C1270.95,680.55 1271.69,679.44 1272.53,678.98 C1273.38,678.53 1274.22,678.47 1275.07,678.16 C1275.91,677.85 1276.54,676.84 1277.60,677.10 C1278.66,677.36 1280.23,680.12 1281.40,679.70 C1282.57,679.28 1283.60,675.14 1284.60,674.60 C1285.60,674.06 1286.47,675.63 1287.40,676.48 C1288.33,677.33 1289.32,678.97 1290.20,679.70 C1291.08,680.43 1291.87,680.42 1292.70,680.86 C1293.53,681.30 1294.37,682.09 1295.20,682.32 C1296.03,682.54 1296.86,681.93 1297.70,682.20 C1298.54,682.47 1299.38,683.06 1300.22,683.93 C1301.07,684.79 1301.91,686.58 1302.75,687.38 C1303.59,688.19 1304.43,688.09 1305.28,688.78 C1306.12,689.46 1307.00,690.93 1307.80,691.50 C1308.60,692.07 1309.32,691.55 1310.08,692.19 C1310.84,692.83 1311.60,694.69 1312.36,695.35 C1313.12,696.01 1313.88,695.81 1314.64,696.16 C1315.40,696.52 1316.16,696.87 1316.92,697.48 C1317.68,698.09 1318.44,699.63 1319.20,699.80 C1319.96,699.97 1320.71,698.99 1321.46,698.51 C1322.21,698.04 1322.97,697.34 1323.72,696.94 C1324.47,696.55 1325.23,696.46 1325.98,696.14 C1326.73,695.82 1327.49,695.41 1328.24,695.05 C1328.99,694.70 1329.71,694.30 1330.50,694.00 C1331.29,693.70 1332.17,693.43 1333.00,693.27 C1333.83,693.11 1334.67,693.21 1335.50,693.04 C1336.33,692.88 1337.16,693.48 1338.00,692.30 C1338.84,691.12 1339.69,688.08 1340.53,685.98 C1341.38,683.88 1342.22,681.59 1343.07,679.69 C1343.91,677.79 1344.79,675.49 1345.60,674.60 C1346.41,673.71 1347.13,674.30 1347.90,674.37 C1348.67,674.44 1349.43,674.67 1350.20,675.01 C1350.97,675.35 1352.12,676.17 1352.50,676.40" fill="none" stroke="#e0505f" stroke-width="1.3" stroke-linejoin="round"/>
<text x="1032.60" y="657.80" font-size="15.5" fill="#ccccdc" stroke="#ccccdc" stroke-width="0.3" textLength="104.40" lengthAdjust="spacingAndGlyphs">Power Usage</text>
<text x="1284.60" y="663.30" font-size="23.5" fill="#f2495c" stroke="#f2495c" stroke-width="0.3" textLength="38.40" lengthAdjust="spacingAndGlyphs">230</text>
<text x="1329.20" y="663.30" font-size="21" fill="#f2495c" stroke="#f2495c" stroke-width="0.3" textLength="15.20" lengthAdjust="spacingAndGlyphs">w</text>
<rect x="910.50" y="710.50" width="104.00" height="105.00" rx="1.5" fill="#181b1f" stroke="#2c2e33" stroke-width="1"/>
<clipPath id="rfc"><rect x="910.0" y="710" width="48.2" height="40"/></clipPath>
<g clip-path="url(#rfc)">
<text x="919.40" y="733.00" font-size="14.5" fill="#ccccdc" stroke="#ccccdc" stroke-width="0.3" textLength="82.00" lengthAdjust="spacingAndGlyphs">Root FS Used</text>
</g>
<circle cx="974.00" cy="727.00" r="6.2" fill="none" stroke="#9a9aa3" stroke-width="1.3"/>
<rect x="973.25" y="725.80" width="1.5" height="4.6" fill="#9a9aa3"/>
<circle cx="974.00" cy="723.70" r="0.9" fill="#9a9aa3"/>
<text x="926.60" y="788.70" font-size="28" fill="#73bf69" stroke="#73bf69" stroke-width="0.3" textLength="57.80" lengthAdjust="spacingAndGlyphs">34.6</text>
<text x="987.50" y="788.70" font-size="16.5" fill="#73bf69" stroke="#73bf69" stroke-width="0.3" textLength="10.80" lengthAdjust="spacingAndGlyphs">%</text>
<rect x="1024.00" y="711.00" width="103.00" height="104.00" rx="1.5" fill="url(#glg)"/>
<text x="1075.50" y="751.80" font-size="13.5" fill="#ffffff" stroke="#ffffff" stroke-width="0.05" text-anchor="middle" textLength="67.90" lengthAdjust="spacingAndGlyphs">RAID Temp</text>
<text x="1063.50" y="781.00" font-size="28" fill="#ffffff" stroke="#ffffff" stroke-width="0.3" text-anchor="middle" textLength="33.00" lengthAdjust="spacingAndGlyphs">49</text>
<text x="1095.50" y="781.00" font-size="17.5" fill="#ffffff" stroke="#ffffff" stroke-width="0.3" text-anchor="middle" textLength="17.70" lengthAdjust="spacingAndGlyphs">°C</text>
<rect x="1135.50" y="710.50" width="104.00" height="105.00" rx="1.5" fill="#181b1f" stroke="#2c2e33" stroke-width="1"/>
<rect x="1136.00" y="743" width="103.00" height="72" rx="1.5" fill="url(#glg)"/>
<text x="1144.40" y="732.00" font-size="14.5" fill="#ccccdc" stroke="#ccccdc" stroke-width="0.3" textLength="70.50" lengthAdjust="spacingAndGlyphs">CPU Temp</text>
<text x="1173.30" y="789.90" font-size="31.5" fill="#ffffff" stroke="#ffffff" stroke-width="0.3" text-anchor="middle" textLength="35.60" lengthAdjust="spacingAndGlyphs">79</text>
<text x="1208.90" y="789.90" font-size="19.5" fill="#ffffff" stroke="#ffffff" stroke-width="0.3" text-anchor="middle" textLength="20.40" lengthAdjust="spacingAndGlyphs">°C</text>
<rect x="1248.50" y="710.50" width="104.00" height="105.00" rx="1.5" fill="#181b1f" stroke="#2c2e33" stroke-width="1"/>
<rect x="1249.00" y="743" width="103.00" height="72" rx="1" fill="#73bf69"/>
<text x="1257.30" y="732.00" font-size="14.5" fill="#ccccdc" stroke="#ccccdc" stroke-width="0.3" textLength="38.70" lengthAdjust="spacingAndGlyphs">Client</text>
<circle cx="1311.70" cy="727.00" r="6.2" fill="none" stroke="#9a9aa3" stroke-width="1.3"/>
<rect x="1310.95" y="725.80" width="1.5" height="4.6" fill="#9a9aa3"/>
<circle cx="1311.70" cy="723.70" r="0.9" fill="#9a9aa3"/>
<rect x="1258" y="773.1" width="2.6" height="11" fill="#ffffff"/>
<rect x="1340.7" y="773.1" width="2.6" height="11" fill="#ffffff"/>
<rect x="1260.6" y="768.9" width="79.7" height="20" rx="10" fill="#85c77a" filter="url(#blur1)"/>
</svg></body></html>
